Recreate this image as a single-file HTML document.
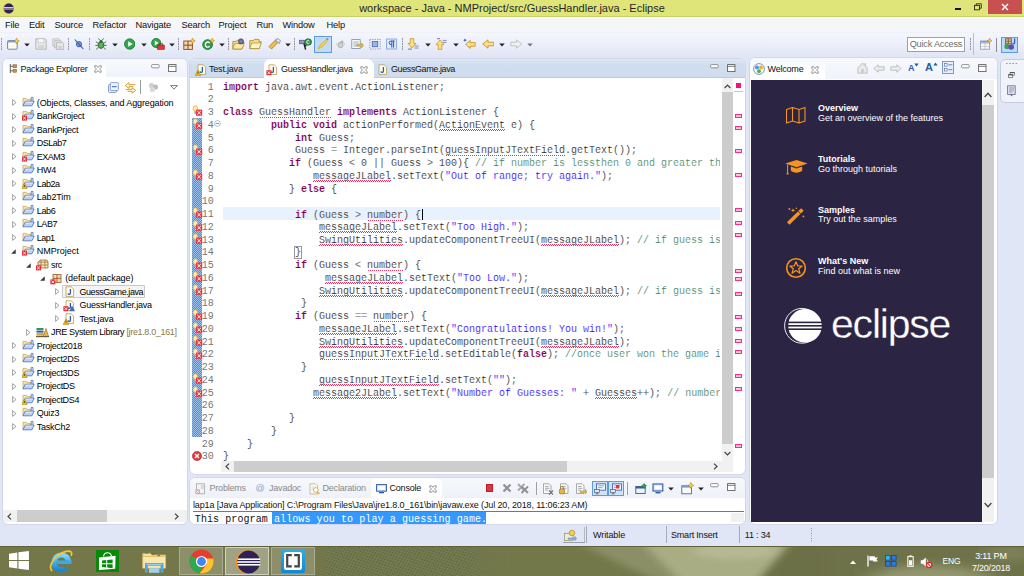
<!DOCTYPE html><html><head><meta charset="utf-8"><title>Eclipse</title><style>
*{box-sizing:border-box;margin:0;padding:0}
html,body{width:1024px;height:576px;overflow:hidden;background:#e1e6f6;font-family:"Liberation Sans",sans-serif;font-size:9px;color:#000}
.abs{position:absolute}
#title{position:absolute;left:0;top:0;width:1024px;height:16.6px;background:#e0e57a;border-bottom:1px solid #cbd066}
#title .t{position:absolute;left:0;width:1024px;top:2.1px;text-align:center;font-size:11px;line-height:13px;color:#262626;letter-spacing:0px}
#menubar{position:absolute;left:0;top:16.5px;width:1024px;height:15px;background:#f5f6f7}
#menubar span{position:absolute;top:3.2px;font-size:9.3px;line-height:11px;letter-spacing:-0.15px;color:#111}
#toolbar{position:absolute;left:0;top:31.5px;width:1024px;height:26.5px;background:linear-gradient(#ecedf2 0,#f4f6fd 1.2px,#eceffa 50%,#e3e7f6 85%,#e1e6f6)}
.panel{position:absolute;background:#fff;border-radius:5px;overflow:hidden;box-shadow:0 0 0 0.8px #cdd3e4}
.ui{font-size:9px;letter-spacing:-0.2px;white-space:nowrap;line-height:11px}
</style></head><body><div id="title"><div class="t">workspace - Java - NMProject/src/GuessHandler.java - Eclipse</div><svg class="abs" style="left:3px;top:3px" width="11" height="11" viewBox="0 0 11 11"><circle cx="5.5" cy="5.5" r="5.3" fill="#f7941e"/><circle cx="5.8" cy="5.5" r="4.9" fill="#2c2255"/><rect x="1" y="4.2" width="9.6" height="0.8" fill="#fff"/><rect x="1" y="5.6" width="9.6" height="0.8" fill="#fff"/></svg><div class="abs" style="left:955px;top:8px;width:6px;height:2px;background:#111"></div><svg class="abs" style="left:973.6px;top:3px" width="8" height="7.6" viewBox="0 0 9 8"><path d="M2.5 2.2V0.6H8.2V5.6H6.4" fill="none" stroke="#222" stroke-width="1"/><rect x="0.6" y="2.4" width="5.6" height="5" fill="none" stroke="#222" stroke-width="1"/></svg><div class="abs" style="left:988px;top:0;width:34px;height:13.5px;background:#c85050"></div><svg class="abs" style="left:1001px;top:3px" width="8" height="8" viewBox="0 0 8 8"><path d="M1 1L7 7M7 1L1 7" stroke="#fff" stroke-width="1.4"/></svg></div><div id="menubar"><span style="left:5px">File</span><span style="left:29px">Edit</span><span style="left:54.5px">Source</span><span style="left:92.5px">Refactor</span><span style="left:135.5px">Navigate</span><span style="left:181.5px">Search</span><span style="left:218.5px">Project</span><span style="left:256.5px">Run</span><span style="left:282.5px">Window</span><span style="left:326.5px">Help</span></div><div id="toolbar"></div><div class="abs" style="left:1.2px;top:37.5px;width:1px;height:13px;background-image:linear-gradient(#8f8f9a 50%,transparent 50%);background-size:1px 2.6px"></div><svg class="abs" style="left:7px;top:38px" width="12.5" height="12" viewBox="0 0 12.5 12"><rect x="0.6" y="2.6" width="9.6" height="8.6" rx="0.8" fill="#fdfbea" stroke="#5a78b8" stroke-width="0.9"/><rect x="0.6" y="2.6" width="9.6" height="1.8" fill="#7a9ad8"/><path d="M9.6 0.2L10.7 2.2L12.4 3L10.7 4L9.6 6L8.6 4L6.8 3L8.6 2.2Z" fill="#f6d04a" stroke="#a97a10" stroke-width="0.5"/></svg><svg class="abs" style="left:23.5px;top:42.5px" width="6" height="4" viewBox="0 0 6 4"><path d="M0.2 0.4H5.8L3 3.6Z" fill="#222"/></svg><svg class="abs" style="left:35px;top:38px" width="12" height="12" viewBox="0 0 12 12"><path d="M0.8 0.8H10L11.2 2V11.2H0.8Z" fill="#e9e9e9" stroke="#b0b0b0" stroke-width="0.9"/><rect x="3" y="0.8" width="6" height="4" fill="#f8f8f8" stroke="#b8b8b8" stroke-width="0.6"/><rect x="3" y="7" width="6" height="4.2" fill="#d5d5d5"/></svg><svg class="abs" style="left:52px;top:38px" width="12.5" height="12" viewBox="0 0 12.5 12"><path d="M0.8 0.8H7L8 1.8V8H0.8Z" fill="#ededed" stroke="#b8b8b8" stroke-width="0.8"/><path d="M2.6 2.6H8.8L9.8 3.6V9.8H2.6Z" fill="#e9e9e9" stroke="#b5b5b5" stroke-width="0.8"/><path d="M4.4 4.4H10.6L11.6 5.4V11.6H4.4Z" fill="#e6e6e6" stroke="#b0b0b0" stroke-width="0.8"/><rect x="6" y="8" width="4" height="3.4" fill="#d0d0d0"/></svg><div class="abs" style="left:68.2px;top:37.5px;width:1px;height:13px;background-image:linear-gradient(#8f8f9a 50%,transparent 50%);background-size:1px 2.6px"></div><svg class="abs" style="left:74px;top:38px" width="10" height="12" viewBox="0 0 10 12"><circle cx="5" cy="6.2" r="2.6" fill="#7aa0e0" stroke="#2f5aa8" stroke-width="0.9"/><path d="M0.8 1.5L9.2 10.8" stroke="#2f5aa8" stroke-width="1.1"/></svg><div class="abs" style="left:89.2px;top:37.5px;width:1px;height:13px;background-image:linear-gradient(#8f8f9a 50%,transparent 50%);background-size:1px 2.6px"></div><svg class="abs" style="left:94.5px;top:38px" width="12" height="12" viewBox="0 0 12 12"><ellipse cx="6" cy="7" rx="2.8" ry="3.4" fill="#5fae5a" stroke="#1f5a2a" stroke-width="0.8"/><circle cx="6" cy="3.2" r="1.5" fill="#2f6f3a"/><path d="M3.2 5.4L0.8 3.6M8.8 5.4L11.2 3.6M3 7.4H0.4M9 7.4H11.6M3.4 9.4L1.2 11.4M8.6 9.4L10.8 11.4M4.6 2L3.4 0.4M7.4 2L8.6 0.4" stroke="#1f5a2a" stroke-width="0.8"/></svg><svg class="abs" style="left:112px;top:42.5px" width="6" height="4" viewBox="0 0 6 4"><path d="M0.2 0.4H5.8L3 3.6Z" fill="#222"/></svg><svg class="abs" style="left:123.5px;top:38px" width="11.5" height="12" viewBox="0 0 11.5 12"><circle cx="5.7" cy="6" r="5.2" fill="#2fa84a" stroke="#1a7030" stroke-width="0.8"/><path d="M4.2 3.2L8.6 6L4.2 8.8Z" fill="#fff"/></svg><svg class="abs" style="left:140.5px;top:42.5px" width="6" height="4" viewBox="0 0 6 4"><path d="M0.2 0.4H5.8L3 3.6Z" fill="#222"/></svg><svg class="abs" style="left:151px;top:38px" width="14" height="12" viewBox="0 0 14 12"><circle cx="5.2" cy="5" r="4.6" fill="#2fa84a" stroke="#1a7030" stroke-width="0.8"/><path d="M3.8 2.6L7.6 5L3.8 7.4Z" fill="#fff"/><rect x="6.4" y="7" width="7" height="4.6" rx="0.6" fill="#e0353d" stroke="#8a1a20" stroke-width="0.6"/><path d="M8.2 7V5.8H11.6V7" fill="none" stroke="#8a1a20" stroke-width="0.8"/></svg><svg class="abs" style="left:169px;top:42.5px" width="6" height="4" viewBox="0 0 6 4"><path d="M0.2 0.4H5.8L3 3.6Z" fill="#222"/></svg><div class="abs" style="left:178px;top:37.5px;width:1px;height:13px;background-image:linear-gradient(#8f8f9a 50%,transparent 50%);background-size:1px 2.6px"></div><svg class="abs" style="left:183px;top:38px" width="12.5" height="12" viewBox="0 0 12.5 12"><rect x="0.8" y="3" width="8.6" height="8.4" fill="#f1d9b0" stroke="#8a4a20" stroke-width="0.9"/><path d="M5 3V11.4M0.8 7.2H9.4" stroke="#8a4a20" stroke-width="1"/><path d="M9.6 0.2L10.6 2L12.3 2.8L10.6 3.7L9.6 5.6L8.7 3.7L7 2.8L8.7 2Z" fill="#f6d04a" stroke="#a97a10" stroke-width="0.5"/></svg><svg class="abs" style="left:201.5px;top:38px" width="13" height="12" viewBox="0 0 13 12"><circle cx="5.6" cy="6.6" r="4.9" fill="#2f9a4a" stroke="#1a6a30" stroke-width="0.8"/><path d="M7.6 5A2.4 2.6 0 1 0 7.6 8.2" fill="none" stroke="#fff" stroke-width="1.3"/><path d="M10.2 0.2L11.1 1.9L12.7 2.6L11.1 3.4L10.2 5.2L9.4 3.4L7.8 2.6L9.4 1.9Z" fill="#f6d04a" stroke="#a97a10" stroke-width="0.5"/></svg><svg class="abs" style="left:218.5px;top:42.5px" width="6" height="4" viewBox="0 0 6 4"><path d="M0.2 0.4H5.8L3 3.6Z" fill="#222"/></svg><div class="abs" style="left:227.5px;top:37.5px;width:1px;height:13px;background-image:linear-gradient(#8f8f9a 50%,transparent 50%);background-size:1px 2.6px"></div><svg class="abs" style="left:231.5px;top:38px" width="13" height="12" viewBox="0 0 13 12"><path d="M0.8 3.4H4.2L5.2 2.2H9.4V4.4H12L10 11H0.8Z" fill="#f6dc8a" stroke="#a9862a" stroke-width="0.8"/><path d="M2.6 5.6H12.2L10 11H0.8Z" fill="#fbe9a8" stroke="#a9862a" stroke-width="0.7"/><circle cx="9" cy="3.4" r="2.6" fill="#7a6ab0" stroke="#3a2a70" stroke-width="0.6"/><circle cx="9" cy="3.4" r="1" fill="#4fb04a"/></svg><svg class="abs" style="left:249px;top:38px" width="13" height="12" viewBox="0 0 13 12"><path d="M0.8 2.6H4.4L5.4 1.4H10V3.6H12.2L10.2 10.6H0.8Z" fill="#f6dc8a" stroke="#a9862a" stroke-width="0.8"/><path d="M2.8 5H12.4L10.2 10.6H0.8Z" fill="#fdf3c8" stroke="#a9862a" stroke-width="0.7"/></svg><svg class="abs" style="left:268px;top:38px" width="13" height="12" viewBox="0 0 13 12"><path d="M1 9.5L7 3.5L9.5 6L3.5 12Z" fill="#f0c04a" stroke="#8a6a1a" stroke-width="0.7" transform="translate(0,-1)"/><path d="M7.4 1.8L11.2 5.6L12.4 2.8L10.2 0.6Z" fill="#e9e9f3" stroke="#6a6a8a" stroke-width="0.7"/></svg><svg class="abs" style="left:285px;top:42.5px" width="6" height="4" viewBox="0 0 6 4"><path d="M0.2 0.4H5.8L3 3.6Z" fill="#222"/></svg><div class="abs" style="left:294px;top:37.5px;width:1px;height:13px;background-image:linear-gradient(#8f8f9a 50%,transparent 50%);background-size:1px 2.6px"></div><svg class="abs" style="left:299px;top:38px" width="13" height="12" viewBox="0 0 13 12"><rect x="0.6" y="2.2" width="5" height="3.6" fill="#8a9ac0" stroke="#3a4a70" stroke-width="0.6"/><path d="M5 5.6L6.6 11.6" stroke="#222" stroke-width="1.5"/><path d="M5.4 5.4L8 8L5.6 9Z" fill="#222"/><circle cx="9.2" cy="4" r="3.3" fill="#2f9a4a" stroke="#1a5a2a" stroke-width="0.7"/><path d="M10.4 3A1.5 1.6 0 1 0 10.4 5" fill="none" stroke="#fff" stroke-width="0.9"/></svg><div class="abs" style="left:314px;top:36px;width:17.5px;height:16.5px;background:#c2dbf8;border:1px solid #5b9be0"></div><svg class="abs" style="left:317px;top:38px" width="12" height="12" viewBox="0 0 12 12"><path d="M1 11L3.4 6.6L10.4 0.8L11.4 1.8L5.4 8.8Z" fill="#f4d44a" stroke="#c9a020" stroke-width="0.6"/><path d="M0.6 11.4L2.6 8L4.4 9.8Z" fill="#e9c030"/><path d="M9.4 1.6L11 0.4" stroke="#8a8a9a" stroke-width="1.4"/></svg><svg class="abs" style="left:335.5px;top:38px" width="9" height="12" viewBox="0 0 9 12"><ellipse cx="4.5" cy="7" rx="2.6" ry="2.8" fill="#cfcfcf" stroke="#a0a0a0" stroke-width="0.7"/><circle cx="6" cy="4" r="1.6" fill="#b5b5b5"/><path d="M1 6H0M8 6H9" stroke="#a0a0a0" stroke-width="0.7"/></svg><svg class="abs" style="left:351px;top:38px" width="13" height="12" viewBox="0 0 13 12"><rect x="0.8" y="1.6" width="8.4" height="9" fill="#fbfbf3" stroke="#7a8ab0" stroke-width="0.8"/><path d="M2.4 4H7.6M2.4 6H7.6M2.4 8H6" stroke="#7a8ab0" stroke-width="0.7"/><path d="M6 6.6H10.6V5L12.6 7.4L10.6 9.8V8.2H6Z" fill="#f3c64a" stroke="#a97a10" stroke-width="0.5"/></svg><svg class="abs" style="left:368.5px;top:38px" width="12" height="12" viewBox="0 0 12 12"><rect x="0.8" y="1.4" width="10.4" height="9.6" fill="#eef3fb" stroke="#7a8ab0" stroke-width="0.8" stroke-dasharray="1.4 1"/><rect x="3.2" y="3.6" width="5.6" height="5.2" fill="#9ab4e8" stroke="#3a5aa0" stroke-width="0.7"/></svg><svg class="abs" style="left:386px;top:38px" width="11" height="12" viewBox="0 0 11 12"><rect x="0.6" y="1" width="9.8" height="10" fill="#dfe9fb" stroke="#7a9ad8" stroke-width="0.8"/><path d="M7.6 3V9.6M5.8 3V9.6M8.6 3H5A1.8 1.8 0 0 0 5 6.6H5.8" fill="none" stroke="#2f5aa8" stroke-width="1"/></svg><div class="abs" style="left:402px;top:37.5px;width:1px;height:13px;background-image:linear-gradient(#8f8f9a 50%,transparent 50%);background-size:1px 2.6px"></div><svg class="abs" style="left:406.5px;top:38px" width="12" height="12" viewBox="0 0 12 12"><path d="M3.2 0.6H6.8V5.4H9L5 10L1 5.4H3.2Z" fill="#fbdf86" stroke="#c58a1c" stroke-width="0.7"/><path d="M7.6 8H11.6M7.6 10H11.6" stroke="#6a7ab0" stroke-width="0.8"/><rect x="1" y="10.6" width="4" height="1" fill="#6a7ab0"/></svg><svg class="abs" style="left:424.5px;top:42.5px" width="6" height="4" viewBox="0 0 6 4"><path d="M0.2 0.4H5.8L3 3.6Z" fill="#222"/></svg><svg class="abs" style="left:434.5px;top:38px" width="12" height="12" viewBox="0 0 12 12"><path d="M3.2 11.4H6.8V6.6H9L5 2L1 6.6H3.2Z" fill="#fbdf86" stroke="#c58a1c" stroke-width="0.7"/><path d="M7.6 2.4H11.6M7.6 4.4H11.6" stroke="#6a7ab0" stroke-width="0.8"/><rect x="2" y="0.2" width="3" height="1" fill="#6a7ab0"/></svg><svg class="abs" style="left:452.5px;top:42.5px" width="6" height="4" viewBox="0 0 6 4"><path d="M0.2 0.4H5.8L3 3.6Z" fill="#222"/></svg><svg class="abs" style="left:463px;top:38px" width="13" height="12" viewBox="0 0 13 12"><path d="M12.2 4.6H7.2V2.4L2.6 6.4L7.2 10.4V8.2H12.2Z" fill="#fbdf86" stroke="#c58a1c" stroke-width="0.8"/><path d="M2 0.4L2.6 1.6L3.8 2.2L2.6 2.8L2 4L1.4 2.8L0.2 2.2L1.4 1.6Z" fill="#3a5aa0"/></svg><svg class="abs" style="left:481.5px;top:38px" width="12.5" height="12" viewBox="0 0 12.5 12"><path d="M11.8 4.2H6V1.8L0.8 6L6 10.2V7.8H11.8Z" fill="#fbdf86" stroke="#c58a1c" stroke-width="0.8"/></svg><svg class="abs" style="left:498.5px;top:42.5px" width="6" height="4" viewBox="0 0 6 4"><path d="M0.2 0.4H5.8L3 3.6Z" fill="#222"/></svg><svg class="abs" style="left:509.5px;top:38px" width="12.5" height="12" viewBox="0 0 12.5 12"><path d="M0.8 4.2H6.6V1.8L11.8 6L6.6 10.2V7.8H0.8Z" fill="#f1f1f1" stroke="#b8b8b8" stroke-width="0.8"/></svg><svg class="abs" style="left:526.5px;top:42.5px" width="6" height="4" viewBox="0 0 6 4"><path d="M0.2 0.4H5.8L3 3.6Z" fill="#777"/></svg><div class="abs" style="left:907px;top:36.5px;width:57.5px;height:15.5px;background:#fff;border:1px solid #9aa0ad"></div><div class="abs ui" style="left:909.7px;top:39px;color:#6e6e6e;font-size:9.2px;letter-spacing:-0.22px">Quick Access</div><div class="abs" style="left:969.5px;top:37.5px;width:1px;height:13px;background-image:linear-gradient(#8f8f9a 50%,transparent 50%);background-size:1px 2.6px"></div><div class="abs" style="left:972.5px;top:33px;width:1px;height:22px;background:#b8bfd0"></div><svg class="abs" style="left:980px;top:38px" width="12" height="12" viewBox="0 0 12 12"><rect x="0.6" y="3" width="8.8" height="8.2" fill="#fdfbea" stroke="#8a96b0" stroke-width="0.8"/><path d="M0.6 5.6H9.4M0.6 8.4H9.4M5 3V11.2" stroke="#a9b0c4" stroke-width="0.6"/><rect x="0.6" y="3" width="8.8" height="1.6" fill="#7a9ad8"/><path d="M9.6 0.2L10.5 1.9L12 2.6L10.5 3.4L9.6 5.2L8.8 3.4L7.2 2.6L8.8 1.9Z" fill="#f6d04a" stroke="#a97a10" stroke-width="0.5"/></svg><div class="abs" style="left:996px;top:38px;width:1px;height:14px;background:#8a8a8a"></div><div class="abs" style="left:1000.5px;top:37px;width:17.5px;height:16px;background:#bcd8fa;border:1px solid #5b9be0"></div><svg class="abs" style="left:1003.5px;top:38px" width="12" height="12" viewBox="0 0 12 12"><rect x="1.4" y="0.8" width="6" height="5" fill="#e3b88a" stroke="#7a4a20" stroke-width="0.7"/><path d="M4.4 0.8V5.8M1.4 3.3H7.4" stroke="#7a4a20" stroke-width="0.7"/><circle cx="3" cy="8.4" r="2.6" fill="#3f9f5a"/><circle cx="7.2" cy="9" r="2.8" fill="#6a4aa8"/><path d="M10.6 0.6V4.6C10.6 6 9 6.2 8.6 5.2" fill="none" stroke="#2f5aa8" stroke-width="1.2"/></svg><div class="panel" style="left:2.5px;top:58.5px;width:184.5px;height:465.1px;"><div class="abs" style="left:0;top:0;width:185px;height:18.6px;background:linear-gradient(#f7f9fd,#f0f3fa)"></div><div class="abs" style="left:0;top:0;width:103.5px;height:18.6px;background:linear-gradient(#f4f7fc,#fff 70%);border-radius:5px 8px 0 0"></div><svg class="abs" style="left:6.2px;top:5.4px" width="9" height="10" viewBox="0 0 9 11"><path d="M1 0V10M1 2.5H4M1 7.5H4" stroke="#555" stroke-width="1" fill="none"/><rect x="4" y="0.8" width="4" height="3.4" fill="#c98b4a" stroke="#8a5a2a" stroke-width="0.5"/><rect x="4" y="5.8" width="4" height="3.4" fill="#c98b4a" stroke="#8a5a2a" stroke-width="0.5"/></svg><div class="abs ui" style="left:18px;top:5.3px;letter-spacing:-0.25px;color:#111">Package Explorer</div><svg class="abs" style="left:91px;top:6.9px" width="8" height="8" viewBox="0 0 8 8"><path d="M0.8 0.8H2.6L4 2.4L5.4 0.8H7.2V2.2L5.6 4L7.2 5.8V7.2H5.4L4 5.6L2.6 7.2H0.8V5.8L2.4 4L0.8 2.2Z" fill="#fff" stroke="#666" stroke-width="0.7"/></svg><svg class="abs" style="left:148.2px;top:5.199999999999994px" width="9" height="5" viewBox="0 0 9 5"><rect x="0.6" y="0.6" width="7.6" height="3.2" rx="0.9" fill="#fff" stroke="#777" stroke-width="0.8"/></svg><svg class="abs" style="left:165.85px;top:5.6px" width="9" height="9" viewBox="0 0 9 9"><rect x="0.6" y="0.6" width="7.4" height="7" fill="#fff" stroke="#555" stroke-width="0.8"/><path d="M0.6 2.3H8" stroke="#555" stroke-width="0.8"/></svg><svg class="abs" style="left:105.2px;top:23.6px" width="11" height="11" viewBox="0 0 11 11"><rect x="0.5" y="2.5" width="8" height="8" rx="1" fill="#e8eefb" stroke="#6f8cc4" stroke-width="0.8"/><rect x="2.3" y="0.6" width="8" height="8" rx="1" fill="#eef3fd" stroke="#6f8cc4" stroke-width="0.8"/><rect x="4" y="4.2" width="4.6" height="1" fill="#3a5fa8"/></svg><svg class="abs" style="left:121px;top:22.6px" width="13" height="13" viewBox="0 0 13 13"><path d="M11.4 3.6H5V1.6L1.2 4.6L5 7.4V5.6H9.4" fill="#fdf3cf" stroke="#c9931a" stroke-width="0.8"/><path d="M1.6 8.4H8V6.6L11.8 9.4L8 12.2V10.4H3.6" fill="#fdf3cf" stroke="#c9931a" stroke-width="0.8"/></svg><div class="abs" style="left:137.5px;top:21.6px;width:1px;height:14px;background:#9a9a9a"></div><svg class="abs" style="left:145px;top:23.6px" width="11" height="11" viewBox="0 0 11 11"><circle cx="3.5" cy="3.5" r="2.6" fill="#cfcfcf"/><circle cx="7.5" cy="5" r="2.6" fill="#bdbdbd"/><circle cx="4.5" cy="7.5" r="2.6" fill="#d9d9d9"/></svg><svg class="abs" style="left:167px;top:26px" width="8" height="5" viewBox="0 0 8 5"><path d="M0.6 0.6H7.4L4 4.2Z" fill="#fff" stroke="#555" stroke-width="0.8"/></svg><svg class="abs" style="left:9.5px;top:40.89999999999999px" width="5" height="7" viewBox="0 0 5 7"><path d="M0.6 0.6L4 3.5L0.6 6.4Z" fill="#fff" stroke="#8a8a8a" stroke-width="0.8"/></svg><svg class="abs" style="left:19.0px;top:37.3px" width="13" height="12" viewBox="0 0 13 12"><path d="M1 9.6V2.4H4.4L5.4 3.4H8.6V5.4" fill="#f8e7ad" stroke="#c9a550" stroke-width="0.8"/><path d="M9.2 5V1.4H11V5.6" fill="#eef4fd" stroke="#4a70b8" stroke-width="0.8"/><path d="M0.9 9.8L3.2 5.2H12.2L9.9 9.8Z" fill="#bcd2f4" stroke="#4a70b8" stroke-width="0.8"/><path d="M3.6 6.1H10.8" stroke="#eaf1fc" stroke-width="0.8"/></svg><div class="abs ui" style="left:34.3px;top:38.099999999999994px;line-height:12px;letter-spacing:-0.129px">(Objects, Classes, and Aggregation</div><svg class="abs" style="left:9.5px;top:54.39999999999999px" width="5" height="7" viewBox="0 0 5 7"><path d="M0.6 0.6L4 3.5L0.6 6.4Z" fill="#fff" stroke="#8a8a8a" stroke-width="0.8"/></svg><svg class="abs" style="left:19.0px;top:50.8px" width="13" height="12" viewBox="0 0 13 12"><path d="M1 9.6V2.4H4.4L5.4 3.4H8.6V5.4" fill="#f8e7ad" stroke="#c9a550" stroke-width="0.8"/><path d="M9.2 5V1.4H11V5.6" fill="#eef4fd" stroke="#4a70b8" stroke-width="0.8"/><path d="M0.9 9.8L3.2 5.2H12.2L9.9 9.8Z" fill="#bcd2f4" stroke="#4a70b8" stroke-width="0.8"/><path d="M3.6 6.1H10.8" stroke="#eaf1fc" stroke-width="0.8"/><rect x="0" y="6.6" width="5" height="5" fill="#e0303a"/><path d="M1.2 7.8L3.8 10.4M3.8 7.8L1.2 10.4" stroke="#fff" stroke-width="0.9"/></svg><div class="abs ui" style="left:34.3px;top:51.599999999999994px;line-height:12px;letter-spacing:-0.176px">BankGroject</div><svg class="abs" style="left:9.5px;top:67.89999999999999px" width="5" height="7" viewBox="0 0 5 7"><path d="M0.6 0.6L4 3.5L0.6 6.4Z" fill="#fff" stroke="#8a8a8a" stroke-width="0.8"/></svg><svg class="abs" style="left:19.0px;top:64.3px" width="13" height="12" viewBox="0 0 13 12"><path d="M1 9.6V2.4H4.4L5.4 3.4H8.6V5.4" fill="#f8e7ad" stroke="#c9a550" stroke-width="0.8"/><path d="M9.2 5V1.4H11V5.6" fill="#eef4fd" stroke="#4a70b8" stroke-width="0.8"/><path d="M0.9 9.8L3.2 5.2H12.2L9.9 9.8Z" fill="#bcd2f4" stroke="#4a70b8" stroke-width="0.8"/><path d="M3.6 6.1H10.8" stroke="#eaf1fc" stroke-width="0.8"/></svg><div class="abs ui" style="left:34.3px;top:65.1px;line-height:12px;letter-spacing:-0.193px">BankPrject</div><svg class="abs" style="left:9.5px;top:81.39999999999999px" width="5" height="7" viewBox="0 0 5 7"><path d="M0.6 0.6L4 3.5L0.6 6.4Z" fill="#fff" stroke="#8a8a8a" stroke-width="0.8"/></svg><svg class="abs" style="left:19.0px;top:77.8px" width="13" height="12" viewBox="0 0 13 12"><path d="M1 9.6V2.4H4.4L5.4 3.4H8.6V5.4" fill="#f8e7ad" stroke="#c9a550" stroke-width="0.8"/><path d="M9.2 5V1.4H11V5.6" fill="#eef4fd" stroke="#4a70b8" stroke-width="0.8"/><path d="M0.9 9.8L3.2 5.2H12.2L9.9 9.8Z" fill="#bcd2f4" stroke="#4a70b8" stroke-width="0.8"/><path d="M3.6 6.1H10.8" stroke="#eaf1fc" stroke-width="0.8"/></svg><div class="abs ui" style="left:34.3px;top:78.6px;line-height:12px;letter-spacing:-0.522px">DSLab7</div><svg class="abs" style="left:9.5px;top:94.89999999999999px" width="5" height="7" viewBox="0 0 5 7"><path d="M0.6 0.6L4 3.5L0.6 6.4Z" fill="#fff" stroke="#8a8a8a" stroke-width="0.8"/></svg><svg class="abs" style="left:19.0px;top:91.3px" width="13" height="12" viewBox="0 0 13 12"><path d="M1 9.6V2.4H4.4L5.4 3.4H8.6V5.4" fill="#f8e7ad" stroke="#c9a550" stroke-width="0.8"/><path d="M9.2 5V1.4H11V5.6" fill="#eef4fd" stroke="#4a70b8" stroke-width="0.8"/><path d="M0.9 9.8L3.2 5.2H12.2L9.9 9.8Z" fill="#bcd2f4" stroke="#4a70b8" stroke-width="0.8"/><path d="M3.6 6.1H10.8" stroke="#eaf1fc" stroke-width="0.8"/><rect x="0" y="6.6" width="5" height="5" fill="#e0303a"/><path d="M1.2 7.8L3.8 10.4M3.8 7.8L1.2 10.4" stroke="#fff" stroke-width="0.9"/></svg><div class="abs ui" style="left:34.3px;top:92.1px;line-height:12px;letter-spacing:-0.483px">EXAM3</div><svg class="abs" style="left:9.5px;top:108.39999999999999px" width="5" height="7" viewBox="0 0 5 7"><path d="M0.6 0.6L4 3.5L0.6 6.4Z" fill="#fff" stroke="#8a8a8a" stroke-width="0.8"/></svg><svg class="abs" style="left:19.0px;top:104.8px" width="13" height="12" viewBox="0 0 13 12"><path d="M1 9.6V2.4H4.4L5.4 3.4H8.6V5.4" fill="#f8e7ad" stroke="#c9a550" stroke-width="0.8"/><path d="M9.2 5V1.4H11V5.6" fill="#eef4fd" stroke="#4a70b8" stroke-width="0.8"/><path d="M0.9 9.8L3.2 5.2H12.2L9.9 9.8Z" fill="#bcd2f4" stroke="#4a70b8" stroke-width="0.8"/><path d="M3.6 6.1H10.8" stroke="#eaf1fc" stroke-width="0.8"/></svg><div class="abs ui" style="left:34.3px;top:105.6px;line-height:12px;letter-spacing:-0.333px">HW4</div><svg class="abs" style="left:9.5px;top:121.89999999999999px" width="5" height="7" viewBox="0 0 5 7"><path d="M0.6 0.6L4 3.5L0.6 6.4Z" fill="#fff" stroke="#8a8a8a" stroke-width="0.8"/></svg><svg class="abs" style="left:19.0px;top:118.3px" width="13" height="12" viewBox="0 0 13 12"><path d="M1 9.6V2.4H4.4L5.4 3.4H8.6V5.4" fill="#f8e7ad" stroke="#c9a550" stroke-width="0.8"/><path d="M9.2 5V1.4H11V5.6" fill="#eef4fd" stroke="#4a70b8" stroke-width="0.8"/><path d="M0.9 9.8L3.2 5.2H12.2L9.9 9.8Z" fill="#bcd2f4" stroke="#4a70b8" stroke-width="0.8"/><path d="M3.6 6.1H10.8" stroke="#eaf1fc" stroke-width="0.8"/><path d="M2.5 6.2L5.2 11.4H-0.2Z" fill="#f5c21b" stroke="#a97a00" stroke-width="0.6"/><rect x="2.2" y="8" width="0.7" height="1.8" fill="#222"/></svg><div class="abs ui" style="left:34.3px;top:119.1px;line-height:12px;letter-spacing:-0.426px">Lab2a</div><svg class="abs" style="left:9.5px;top:135.4px" width="5" height="7" viewBox="0 0 5 7"><path d="M0.6 0.6L4 3.5L0.6 6.4Z" fill="#fff" stroke="#8a8a8a" stroke-width="0.8"/></svg><svg class="abs" style="left:19.0px;top:131.79999999999998px" width="13" height="12" viewBox="0 0 13 12"><path d="M1 9.6V2.4H4.4L5.4 3.4H8.6V5.4" fill="#f8e7ad" stroke="#c9a550" stroke-width="0.8"/><path d="M9.2 5V1.4H11V5.6" fill="#eef4fd" stroke="#4a70b8" stroke-width="0.8"/><path d="M0.9 9.8L3.2 5.2H12.2L9.9 9.8Z" fill="#bcd2f4" stroke="#4a70b8" stroke-width="0.8"/><path d="M3.6 6.1H10.8" stroke="#eaf1fc" stroke-width="0.8"/></svg><div class="abs ui" style="left:34.3px;top:132.6px;line-height:12px;letter-spacing:-0.127px">Lab2Tim</div><svg class="abs" style="left:9.5px;top:148.9px" width="5" height="7" viewBox="0 0 5 7"><path d="M0.6 0.6L4 3.5L0.6 6.4Z" fill="#fff" stroke="#8a8a8a" stroke-width="0.8"/></svg><svg class="abs" style="left:19.0px;top:145.29999999999998px" width="13" height="12" viewBox="0 0 13 12"><path d="M1 9.6V2.4H4.4L5.4 3.4H8.6V5.4" fill="#f8e7ad" stroke="#c9a550" stroke-width="0.8"/><path d="M9.2 5V1.4H11V5.6" fill="#eef4fd" stroke="#4a70b8" stroke-width="0.8"/><path d="M0.9 9.8L3.2 5.2H12.2L9.9 9.8Z" fill="#bcd2f4" stroke="#4a70b8" stroke-width="0.8"/><path d="M3.6 6.1H10.8" stroke="#eaf1fc" stroke-width="0.8"/></svg><div class="abs ui" style="left:34.3px;top:146.1px;line-height:12px;letter-spacing:-0.383px">Lab6</div><svg class="abs" style="left:9.5px;top:162.4px" width="5" height="7" viewBox="0 0 5 7"><path d="M0.6 0.6L4 3.5L0.6 6.4Z" fill="#fff" stroke="#8a8a8a" stroke-width="0.8"/></svg><svg class="abs" style="left:19.0px;top:158.79999999999998px" width="13" height="12" viewBox="0 0 13 12"><path d="M1 9.6V2.4H4.4L5.4 3.4H8.6V5.4" fill="#f8e7ad" stroke="#c9a550" stroke-width="0.8"/><path d="M9.2 5V1.4H11V5.6" fill="#eef4fd" stroke="#4a70b8" stroke-width="0.8"/><path d="M0.9 9.8L3.2 5.2H12.2L9.9 9.8Z" fill="#bcd2f4" stroke="#4a70b8" stroke-width="0.8"/><path d="M3.6 6.1H10.8" stroke="#eaf1fc" stroke-width="0.8"/></svg><div class="abs ui" style="left:34.3px;top:159.6px;line-height:12px;letter-spacing:-0.433px">LAB7</div><svg class="abs" style="left:9.5px;top:175.9px" width="5" height="7" viewBox="0 0 5 7"><path d="M0.6 0.6L4 3.5L0.6 6.4Z" fill="#fff" stroke="#8a8a8a" stroke-width="0.8"/></svg><svg class="abs" style="left:19.0px;top:172.29999999999998px" width="13" height="12" viewBox="0 0 13 12"><path d="M1 9.6V2.4H4.4L5.4 3.4H8.6V5.4" fill="#f8e7ad" stroke="#c9a550" stroke-width="0.8"/><path d="M9.2 5V1.4H11V5.6" fill="#eef4fd" stroke="#4a70b8" stroke-width="0.8"/><path d="M0.9 9.8L3.2 5.2H12.2L9.9 9.8Z" fill="#bcd2f4" stroke="#4a70b8" stroke-width="0.8"/><path d="M3.6 6.1H10.8" stroke="#eaf1fc" stroke-width="0.8"/></svg><div class="abs ui" style="left:34.3px;top:173.1px;line-height:12px;letter-spacing:-0.583px">Lap1</div><svg class="abs" style="left:8.9px;top:190.79999999999998px" width="5.2" height="5.2" viewBox="0 0 6 6"><path d="M5.2 0.8V5.2H0.8Z" fill="#3a3a3a" stroke="#222" stroke-width="0.5"/></svg><svg class="abs" style="left:19.0px;top:185.79999999999998px" width="13" height="12" viewBox="0 0 13 12"><path d="M1 9.6V2.4H4.4L5.4 3.4H8.6V5.4" fill="#f8e7ad" stroke="#c9a550" stroke-width="0.8"/><path d="M9.2 5V1.4H11V5.6" fill="#eef4fd" stroke="#4a70b8" stroke-width="0.8"/><path d="M0.9 9.8L3.2 5.2H12.2L9.9 9.8Z" fill="#bcd2f4" stroke="#4a70b8" stroke-width="0.8"/><path d="M3.6 6.1H10.8" stroke="#eaf1fc" stroke-width="0.8"/><rect x="0" y="6.6" width="5" height="5" fill="#e0303a"/><path d="M1.2 7.8L3.8 10.4M3.8 7.8L1.2 10.4" stroke="#fff" stroke-width="0.9"/></svg><div class="abs ui" style="left:34.3px;top:186.6px;line-height:12px;letter-spacing:-0.013px">NMProject</div><svg class="abs" style="left:23.099999999999998px;top:204.3px" width="5.2" height="5.2" viewBox="0 0 6 6"><path d="M5.2 0.8V5.2H0.8Z" fill="#3a3a3a" stroke="#222" stroke-width="0.5"/></svg><svg class="abs" style="left:33.2px;top:199.60000000000002px" width="13" height="13" viewBox="0 0 13 13"><path d="M2 4.2L4 2H11L12 4.2V10H2Z" fill="#f6e6c0" stroke="#9a6a30" stroke-width="0.8"/><path d="M2 4.2H12M5 2V10M9 2V10M2 7H12" stroke="#9a6a30" stroke-width="0.7" fill="none"/><rect x="0" y="7.4" width="5" height="5" fill="#e0303a"/><path d="M1.2 8.6L3.8 11.2M3.8 8.6L1.2 11.2" stroke="#fff" stroke-width="0.9"/></svg><div class="abs ui" style="left:48.5px;top:200.10000000000002px;line-height:12px;letter-spacing:-0.333px">src</div><svg class="abs" style="left:37.3px;top:217.8px" width="5.2" height="5.2" viewBox="0 0 6 6"><path d="M5.2 0.8V5.2H0.8Z" fill="#3a3a3a" stroke="#222" stroke-width="0.5"/></svg><svg class="abs" style="left:47.4px;top:213.10000000000002px" width="13" height="13" viewBox="0 0 13 13"><rect x="3" y="2.4" width="8" height="8" fill="#f1d9b0" stroke="#9a5a2a" stroke-width="0.8"/><path d="M7 2.4V10.4M3 6.4H11" stroke="#9a5a2a" stroke-width="0.9"/><rect x="0.4" y="7.4" width="5" height="5" fill="#e0303a"/><path d="M1.6 8.6L4.2 11.2M4.2 8.6L1.6 11.2" stroke="#fff" stroke-width="0.9"/></svg><div class="abs ui" style="left:62.69999999999999px;top:213.60000000000002px;line-height:12px;letter-spacing:-0.079px">(default package)</div><div class="abs" style="left:59.39999999999999px;top:226.90000000000003px;width:83.5px;height:12.2px;border:1px solid #c9c9c9;background:#f4f4f4;border-radius:1px"></div><svg class="abs" style="left:52.099999999999994px;top:229.90000000000003px" width="5" height="7" viewBox="0 0 5 7"><path d="M0.6 0.6L4 3.5L0.6 6.4Z" fill="#fff" stroke="#8a8a8a" stroke-width="0.8"/></svg><svg class="abs" style="left:60.599999999999994px;top:226.50000000000003px" width="13" height="13" viewBox="0 0 13 13"><path d="M3 1.8H8.2L10.6 4.2V11.4H3Z" fill="#fffdf0" stroke="#b99a4a" stroke-width="0.8"/><path d="M7.4 4V8.2C7.4 9.6 5.4 9.8 4.8 8.5" fill="none" stroke="#2f5aa8" stroke-width="1.3"/></svg><div class="abs ui" style="left:76.89999999999999px;top:227.10000000000002px;line-height:12px;letter-spacing:-0.409px">GuessGame.java</div><svg class="abs" style="left:52.099999999999994px;top:243.40000000000003px" width="5" height="7" viewBox="0 0 5 7"><path d="M0.6 0.6L4 3.5L0.6 6.4Z" fill="#fff" stroke="#8a8a8a" stroke-width="0.8"/></svg><svg class="abs" style="left:60.599999999999994px;top:240.00000000000003px" width="13" height="13" viewBox="0 0 13 13"><path d="M3 1.8H8.2L10.6 4.2V11.4H3Z" fill="#fffdf0" stroke="#b99a4a" stroke-width="0.8"/><path d="M7.4 4V8.2C7.4 9.6 5.4 9.8 4.8 8.5" fill="none" stroke="#2f5aa8" stroke-width="1.3"/><path d="M9 6.4L12 12.2H6.4Z" fill="#3b6cc0"/><rect x="0.4" y="7.2" width="5" height="5" fill="#e0303a"/><path d="M1.6 8.4L4.2 11M4.2 8.4L1.6 11" stroke="#fff" stroke-width="0.9"/></svg><div class="abs ui" style="left:76.89999999999999px;top:240.60000000000002px;line-height:12px;letter-spacing:-0.215px">GuessHandler.java</div><svg class="abs" style="left:52.099999999999994px;top:256.90000000000003px" width="5" height="7" viewBox="0 0 5 7"><path d="M0.6 0.6L4 3.5L0.6 6.4Z" fill="#fff" stroke="#8a8a8a" stroke-width="0.8"/></svg><svg class="abs" style="left:60.599999999999994px;top:253.50000000000003px" width="13" height="13" viewBox="0 0 13 13"><path d="M3 1.8H8.2L10.6 4.2V11.4H3Z" fill="#fffdf0" stroke="#b99a4a" stroke-width="0.8"/><path d="M7.4 4V8.2C7.4 9.6 5.4 9.8 4.8 8.5" fill="none" stroke="#2f5aa8" stroke-width="1.3"/><path d="M3 7L5.8 12.4H0.2Z" fill="#f5c21b" stroke="#a97a00" stroke-width="0.6"/><rect x="2.65" y="8.8" width="0.7" height="2" fill="#222"/></svg><div class="abs ui" style="left:76.89999999999999px;top:254.10000000000002px;line-height:12px;letter-spacing:-0.159px">Test.java</div><svg class="abs" style="left:23.7px;top:270.40000000000003px" width="5" height="7" viewBox="0 0 5 7"><path d="M0.6 0.6L4 3.5L0.6 6.4Z" fill="#fff" stroke="#8a8a8a" stroke-width="0.8"/></svg><svg class="abs" style="left:33.2px;top:267.6px" width="13" height="12" viewBox="0 0 13 12"><rect x="0.5" y="2" width="7" height="2" fill="#3f8f5a"/><rect x="0.5" y="4.6" width="7" height="2" fill="#2f5aa8"/><rect x="0.5" y="7.2" width="7" height="2.4" fill="#c9a03a"/><path d="M7 10.5L10 2.5L12.6 10.5Z" fill="#e2b64a" stroke="#8a6a1a" stroke-width="0.6"/><rect x="0" y="10" width="13" height="1.2" fill="#6a5a3a"/></svg><div class="abs ui" style="left:48.5px;top:267.6px;line-height:12px;letter-spacing:-0.347px">JRE System Library <span style="color:#8a7a4a">[jre1.8.0_161]</span></div><svg class="abs" style="left:9.5px;top:283.90000000000003px" width="5" height="7" viewBox="0 0 5 7"><path d="M0.6 0.6L4 3.5L0.6 6.4Z" fill="#fff" stroke="#8a8a8a" stroke-width="0.8"/></svg><svg class="abs" style="left:19.0px;top:280.3px" width="13" height="12" viewBox="0 0 13 12"><path d="M1 9.6V2.4H4.4L5.4 3.4H8.6V5.4" fill="#f8e7ad" stroke="#c9a550" stroke-width="0.8"/><path d="M9.2 5V1.4H11V5.6" fill="#eef4fd" stroke="#4a70b8" stroke-width="0.8"/><path d="M0.9 9.8L3.2 5.2H12.2L9.9 9.8Z" fill="#bcd2f4" stroke="#4a70b8" stroke-width="0.8"/><path d="M3.6 6.1H10.8" stroke="#eaf1fc" stroke-width="0.8"/></svg><div class="abs ui" style="left:34.3px;top:281.1px;line-height:12px;letter-spacing:-0.25px">Project2018</div><svg class="abs" style="left:9.5px;top:297.40000000000003px" width="5" height="7" viewBox="0 0 5 7"><path d="M0.6 0.6L4 3.5L0.6 6.4Z" fill="#fff" stroke="#8a8a8a" stroke-width="0.8"/></svg><svg class="abs" style="left:19.0px;top:293.8px" width="13" height="12" viewBox="0 0 13 12"><path d="M1 9.6V2.4H4.4L5.4 3.4H8.6V5.4" fill="#f8e7ad" stroke="#c9a550" stroke-width="0.8"/><path d="M9.2 5V1.4H11V5.6" fill="#eef4fd" stroke="#4a70b8" stroke-width="0.8"/><path d="M0.9 9.8L3.2 5.2H12.2L9.9 9.8Z" fill="#bcd2f4" stroke="#4a70b8" stroke-width="0.8"/><path d="M3.6 6.1H10.8" stroke="#eaf1fc" stroke-width="0.8"/></svg><div class="abs ui" style="left:34.3px;top:294.6px;line-height:12px;letter-spacing:-0.313px">Project2DS</div><svg class="abs" style="left:9.5px;top:310.90000000000003px" width="5" height="7" viewBox="0 0 5 7"><path d="M0.6 0.6L4 3.5L0.6 6.4Z" fill="#fff" stroke="#8a8a8a" stroke-width="0.8"/></svg><svg class="abs" style="left:19.0px;top:307.3px" width="13" height="12" viewBox="0 0 13 12"><path d="M1 9.6V2.4H4.4L5.4 3.4H8.6V5.4" fill="#f8e7ad" stroke="#c9a550" stroke-width="0.8"/><path d="M9.2 5V1.4H11V5.6" fill="#eef4fd" stroke="#4a70b8" stroke-width="0.8"/><path d="M0.9 9.8L3.2 5.2H12.2L9.9 9.8Z" fill="#bcd2f4" stroke="#4a70b8" stroke-width="0.8"/><path d="M3.6 6.1H10.8" stroke="#eaf1fc" stroke-width="0.8"/><path d="M2.5 6.2L5.2 11.4H-0.2Z" fill="#f5c21b" stroke="#a97a00" stroke-width="0.6"/><rect x="2.2" y="8" width="0.7" height="1.8" fill="#222"/></svg><div class="abs ui" style="left:34.3px;top:308.1px;line-height:12px;letter-spacing:-0.313px">Project3DS</div><svg class="abs" style="left:9.5px;top:324.40000000000003px" width="5" height="7" viewBox="0 0 5 7"><path d="M0.6 0.6L4 3.5L0.6 6.4Z" fill="#fff" stroke="#8a8a8a" stroke-width="0.8"/></svg><svg class="abs" style="left:19.0px;top:320.8px" width="13" height="12" viewBox="0 0 13 12"><path d="M1 9.6V2.4H4.4L5.4 3.4H8.6V5.4" fill="#f8e7ad" stroke="#c9a550" stroke-width="0.8"/><path d="M9.2 5V1.4H11V5.6" fill="#eef4fd" stroke="#4a70b8" stroke-width="0.8"/><path d="M0.9 9.8L3.2 5.2H12.2L9.9 9.8Z" fill="#bcd2f4" stroke="#4a70b8" stroke-width="0.8"/><path d="M3.6 6.1H10.8" stroke="#eaf1fc" stroke-width="0.8"/></svg><div class="abs ui" style="left:34.3px;top:321.6px;line-height:12px;letter-spacing:-0.28px">ProjectDS</div><svg class="abs" style="left:9.5px;top:337.90000000000003px" width="5" height="7" viewBox="0 0 5 7"><path d="M0.6 0.6L4 3.5L0.6 6.4Z" fill="#fff" stroke="#8a8a8a" stroke-width="0.8"/></svg><svg class="abs" style="left:19.0px;top:334.3px" width="13" height="12" viewBox="0 0 13 12"><path d="M1 9.6V2.4H4.4L5.4 3.4H8.6V5.4" fill="#f8e7ad" stroke="#c9a550" stroke-width="0.8"/><path d="M9.2 5V1.4H11V5.6" fill="#eef4fd" stroke="#4a70b8" stroke-width="0.8"/><path d="M0.9 9.8L3.2 5.2H12.2L9.9 9.8Z" fill="#bcd2f4" stroke="#4a70b8" stroke-width="0.8"/><path d="M3.6 6.1H10.8" stroke="#eaf1fc" stroke-width="0.8"/><path d="M2.5 6.2L5.2 11.4H-0.2Z" fill="#f5c21b" stroke="#a97a00" stroke-width="0.6"/><rect x="2.2" y="8" width="0.7" height="1.8" fill="#222"/></svg><div class="abs ui" style="left:34.3px;top:335.1px;line-height:12px;letter-spacing:-0.313px">ProjectDS4</div><svg class="abs" style="left:9.5px;top:351.40000000000003px" width="5" height="7" viewBox="0 0 5 7"><path d="M0.6 0.6L4 3.5L0.6 6.4Z" fill="#fff" stroke="#8a8a8a" stroke-width="0.8"/></svg><svg class="abs" style="left:19.0px;top:347.8px" width="13" height="12" viewBox="0 0 13 12"><path d="M1 9.6V2.4H4.4L5.4 3.4H8.6V5.4" fill="#f8e7ad" stroke="#c9a550" stroke-width="0.8"/><path d="M9.2 5V1.4H11V5.6" fill="#eef4fd" stroke="#4a70b8" stroke-width="0.8"/><path d="M0.9 9.8L3.2 5.2H12.2L9.9 9.8Z" fill="#bcd2f4" stroke="#4a70b8" stroke-width="0.8"/><path d="M3.6 6.1H10.8" stroke="#eaf1fc" stroke-width="0.8"/></svg><div class="abs ui" style="left:34.3px;top:348.6px;line-height:12px;letter-spacing:-0.223px">Quiz3</div><svg class="abs" style="left:9.5px;top:364.90000000000003px" width="5" height="7" viewBox="0 0 5 7"><path d="M0.6 0.6L4 3.5L0.6 6.4Z" fill="#fff" stroke="#8a8a8a" stroke-width="0.8"/></svg><svg class="abs" style="left:19.0px;top:361.3px" width="13" height="12" viewBox="0 0 13 12"><path d="M1 9.6V2.4H4.4L5.4 3.4H8.6V5.4" fill="#f8e7ad" stroke="#c9a550" stroke-width="0.8"/><path d="M9.2 5V1.4H11V5.6" fill="#eef4fd" stroke="#4a70b8" stroke-width="0.8"/><path d="M0.9 9.8L3.2 5.2H12.2L9.9 9.8Z" fill="#bcd2f4" stroke="#4a70b8" stroke-width="0.8"/><path d="M3.6 6.1H10.8" stroke="#eaf1fc" stroke-width="0.8"/></svg><div class="abs ui" style="left:34.3px;top:362.1px;line-height:12px;letter-spacing:-0.245px">TaskCh2</div><div class="abs" style="left:0;top:451.6px;width:185px;height:12px;background:#f1f1f1"></div><div class="abs" style="left:14.5px;top:451.6px;width:90px;height:12px;background:#cdcdcd"></div><svg class="abs" style="left:4.5px;top:454.3px" width="5" height="7" viewBox="0 0 5 7"><path d="M4 0.6L1 3.5L4 6.4" fill="none" stroke="#444" stroke-width="1.2"/></svg><svg class="abs" style="left:171.5px;top:454.3px" width="5" height="7" viewBox="0 0 5 7"><path d="M1 0.6L4 3.5L1 6.4" fill="none" stroke="#444" stroke-width="1.2"/></svg></div><div class="panel" style="left:190px;top:58.7px;width:555px;height:415px;"><div class="abs" style="left:0;top:0;width:556px;height:19px;background:linear-gradient(#dde8f5,#d0deef 30%,#cfdcee);border-bottom:0.7px solid #bccbe0"></div><div class="abs" style="left:73.5px;top:0;width:110px;height:19.5px;background:#fff;border-radius:6px 7px 0 0"></div><svg class="abs" style="left:4.5px;top:4px" width="13" height="13" viewBox="0 0 13 13"><path d="M3 1.8H8.2L10.6 4.2V11.4H3Z" fill="#fffdf0" stroke="#b99a4a" stroke-width="0.8"/><path d="M7.4 4V8.2C7.4 9.6 5.4 9.8 4.8 8.5" fill="none" stroke="#2f5aa8" stroke-width="1.3"/><path d="M3 7L5.8 12.4H0.2Z" fill="#f5c21b" stroke="#a97a00" stroke-width="0.6"/><rect x="2.65" y="8.8" width="0.7" height="2" fill="#222"/></svg><div class="abs ui" style="left:19px;top:5.7px;color:#111">Test.java</div><svg class="abs" style="left:76px;top:4px" width="13" height="13" viewBox="0 0 13 13"><path d="M3 1.8H8.2L10.6 4.2V11.4H3Z" fill="#fffdf0" stroke="#b99a4a" stroke-width="0.8"/><path d="M7.4 4V8.2C7.4 9.6 5.4 9.8 4.8 8.5" fill="none" stroke="#2f5aa8" stroke-width="1.3"/><rect x="0.4" y="7.2" width="5" height="5" fill="#e0303a"/><path d="M1.6 8.4L4.2 11M4.2 8.4L1.6 11" stroke="#fff" stroke-width="0.9"/></svg><div class="abs ui" style="left:91px;top:5.7px;color:#111;letter-spacing:-0.25px">GuessHandler.java</div><svg class="abs" style="left:170px;top:7px" width="8" height="8" viewBox="0 0 8 8"><path d="M0.8 0.8H2.6L4 2.4L5.4 0.8H7.2V2.2L5.6 4L7.2 5.8V7.2H5.4L4 5.6L2.6 7.2H0.8V5.8L2.4 4L0.8 2.2Z" fill="#fff" stroke="#666" stroke-width="0.7"/></svg><svg class="abs" style="left:186px;top:4px" width="13" height="13" viewBox="0 0 13 13"><path d="M3 1.8H8.2L10.6 4.2V11.4H3Z" fill="#fffdf0" stroke="#b99a4a" stroke-width="0.8"/><path d="M7.4 4V8.2C7.4 9.6 5.4 9.8 4.8 8.5" fill="none" stroke="#2f5aa8" stroke-width="1.3"/></svg><div class="abs ui" style="left:201px;top:5.7px;color:#111;letter-spacing:-0.4px">GuessGame.java</div><svg class="abs" style="left:519.7px;top:5.0px" width="9" height="5" viewBox="0 0 9 5"><rect x="0.6" y="0.6" width="7.6" height="3.2" rx="0.9" fill="#fff" stroke="#777" stroke-width="0.8"/></svg><svg class="abs" style="left:536.6px;top:5.0px" width="9" height="9" viewBox="0 0 9 9"><rect x="0.6" y="0.6" width="7.4" height="7" fill="#fff" stroke="#555" stroke-width="0.8"/><path d="M0.6 2.3H8" stroke="#555" stroke-width="0.8"/></svg><div class="abs" style="left:2px;top:59.25px;width:9.5px;height:318.75px;background-color:#9cc0ec;background-image:linear-gradient(45deg,#4d8fdc 25%,transparent 25%,transparent 75%,#4d8fdc 75%),linear-gradient(45deg,#4d8fdc 25%,transparent 25%,transparent 75%,#4d8fdc 75%);background-size:2px 2px;background-position:0 0,1px 1px"></div><div class="abs" style="left:33px;top:148.7px;width:496.5px;height:12.75px;background:#e8f2fe"></div><div class="abs" style="left:0;top:23.0px;width:23.7px;text-align:right;font-family:'Liberation Mono',monospace;font-size:10px;line-height:12.75px;color:#787878;white-space:pre">1
2
3
4
5
6
7
8
9
10
11
12
13
14
15
16
17
18
19
20
21
22
23
24
25
26
27
28
29
30</div><svg class="abs" style="left:1.8px;top:46.6px" width="11" height="12" viewBox="0 0 11 12"><ellipse cx="3.4" cy="3.6" rx="2.3" ry="2.9" fill="#fdeaa6" stroke="#d9ae3c" stroke-width="0.7"/><rect x="2.2" y="6.3" width="2.4" height="2.6" fill="#a9a9b0"/><rect x="4" y="4.6" width="6.2" height="6.2" fill="#e23b43"/><path d="M5.4 6L8.8 9.4M8.8 6L5.4 9.4" stroke="#fff" stroke-width="1"/></svg><svg class="abs" style="left:1.8px;top:59.35px" width="11" height="12" viewBox="0 0 11 12"><ellipse cx="3.4" cy="3.6" rx="2.3" ry="2.9" fill="#fdeaa6" stroke="#d9ae3c" stroke-width="0.7"/><rect x="2.2" y="6.3" width="2.4" height="2.6" fill="#a9a9b0"/><rect x="4" y="4.6" width="6.2" height="6.2" fill="#e23b43"/><path d="M5.4 6L8.8 9.4M8.8 6L5.4 9.4" stroke="#fff" stroke-width="1"/></svg><svg class="abs" style="left:1.8px;top:84.85px" width="11" height="12" viewBox="0 0 11 12"><ellipse cx="3.4" cy="3.6" rx="2.3" ry="2.9" fill="#fdeaa6" stroke="#d9ae3c" stroke-width="0.7"/><rect x="2.2" y="6.3" width="2.4" height="2.6" fill="#a9a9b0"/><rect x="4" y="4.6" width="6.2" height="6.2" fill="#e23b43"/><path d="M5.4 6L8.8 9.4M8.8 6L5.4 9.4" stroke="#fff" stroke-width="1"/></svg><svg class="abs" style="left:1.8px;top:110.35px" width="11" height="12" viewBox="0 0 11 12"><ellipse cx="3.4" cy="3.6" rx="2.3" ry="2.9" fill="#fdeaa6" stroke="#d9ae3c" stroke-width="0.7"/><rect x="2.2" y="6.3" width="2.4" height="2.6" fill="#a9a9b0"/><rect x="4" y="4.6" width="6.2" height="6.2" fill="#e23b43"/><path d="M5.4 6L8.8 9.4M8.8 6L5.4 9.4" stroke="#fff" stroke-width="1"/></svg><svg class="abs" style="left:1.8px;top:148.6px" width="11" height="12" viewBox="0 0 11 12"><ellipse cx="3.4" cy="3.6" rx="2.3" ry="2.9" fill="#fdeaa6" stroke="#d9ae3c" stroke-width="0.7"/><rect x="2.2" y="6.3" width="2.4" height="2.6" fill="#a9a9b0"/><rect x="4" y="4.6" width="6.2" height="6.2" fill="#e23b43"/><path d="M5.4 6L8.8 9.4M8.8 6L5.4 9.4" stroke="#fff" stroke-width="1"/></svg><svg class="abs" style="left:1.8px;top:161.35px" width="11" height="12" viewBox="0 0 11 12"><ellipse cx="3.4" cy="3.6" rx="2.3" ry="2.9" fill="#fdeaa6" stroke="#d9ae3c" stroke-width="0.7"/><rect x="2.2" y="6.3" width="2.4" height="2.6" fill="#a9a9b0"/><rect x="4" y="4.6" width="6.2" height="6.2" fill="#e23b43"/><path d="M5.4 6L8.8 9.4M8.8 6L5.4 9.4" stroke="#fff" stroke-width="1"/></svg><svg class="abs" style="left:1.8px;top:174.1px" width="11" height="12" viewBox="0 0 11 12"><ellipse cx="3.4" cy="3.6" rx="2.3" ry="2.9" fill="#fdeaa6" stroke="#d9ae3c" stroke-width="0.7"/><rect x="2.2" y="6.3" width="2.4" height="2.6" fill="#a9a9b0"/><rect x="4" y="4.6" width="6.2" height="6.2" fill="#e23b43"/><path d="M5.4 6L8.8 9.4M8.8 6L5.4 9.4" stroke="#fff" stroke-width="1"/></svg><svg class="abs" style="left:1.8px;top:199.6px" width="11" height="12" viewBox="0 0 11 12"><ellipse cx="3.4" cy="3.6" rx="2.3" ry="2.9" fill="#fdeaa6" stroke="#d9ae3c" stroke-width="0.7"/><rect x="2.2" y="6.3" width="2.4" height="2.6" fill="#a9a9b0"/><rect x="4" y="4.6" width="6.2" height="6.2" fill="#e23b43"/><path d="M5.4 6L8.8 9.4M8.8 6L5.4 9.4" stroke="#fff" stroke-width="1"/></svg><svg class="abs" style="left:1.8px;top:212.35px" width="11" height="12" viewBox="0 0 11 12"><ellipse cx="3.4" cy="3.6" rx="2.3" ry="2.9" fill="#fdeaa6" stroke="#d9ae3c" stroke-width="0.7"/><rect x="2.2" y="6.3" width="2.4" height="2.6" fill="#a9a9b0"/><rect x="4" y="4.6" width="6.2" height="6.2" fill="#e23b43"/><path d="M5.4 6L8.8 9.4M8.8 6L5.4 9.4" stroke="#fff" stroke-width="1"/></svg><svg class="abs" style="left:1.8px;top:225.1px" width="11" height="12" viewBox="0 0 11 12"><ellipse cx="3.4" cy="3.6" rx="2.3" ry="2.9" fill="#fdeaa6" stroke="#d9ae3c" stroke-width="0.7"/><rect x="2.2" y="6.3" width="2.4" height="2.6" fill="#a9a9b0"/><rect x="4" y="4.6" width="6.2" height="6.2" fill="#e23b43"/><path d="M5.4 6L8.8 9.4M8.8 6L5.4 9.4" stroke="#fff" stroke-width="1"/></svg><svg class="abs" style="left:1.8px;top:250.6px" width="11" height="12" viewBox="0 0 11 12"><ellipse cx="3.4" cy="3.6" rx="2.3" ry="2.9" fill="#fdeaa6" stroke="#d9ae3c" stroke-width="0.7"/><rect x="2.2" y="6.3" width="2.4" height="2.6" fill="#a9a9b0"/><rect x="4" y="4.6" width="6.2" height="6.2" fill="#e23b43"/><path d="M5.4 6L8.8 9.4M8.8 6L5.4 9.4" stroke="#fff" stroke-width="1"/></svg><svg class="abs" style="left:1.8px;top:263.35px" width="11" height="12" viewBox="0 0 11 12"><ellipse cx="3.4" cy="3.6" rx="2.3" ry="2.9" fill="#fdeaa6" stroke="#d9ae3c" stroke-width="0.7"/><rect x="2.2" y="6.3" width="2.4" height="2.6" fill="#a9a9b0"/><rect x="4" y="4.6" width="6.2" height="6.2" fill="#e23b43"/><path d="M5.4 6L8.8 9.4M8.8 6L5.4 9.4" stroke="#fff" stroke-width="1"/></svg><svg class="abs" style="left:1.8px;top:276.1px" width="11" height="12" viewBox="0 0 11 12"><ellipse cx="3.4" cy="3.6" rx="2.3" ry="2.9" fill="#fdeaa6" stroke="#d9ae3c" stroke-width="0.7"/><rect x="2.2" y="6.3" width="2.4" height="2.6" fill="#a9a9b0"/><rect x="4" y="4.6" width="6.2" height="6.2" fill="#e23b43"/><path d="M5.4 6L8.8 9.4M8.8 6L5.4 9.4" stroke="#fff" stroke-width="1"/></svg><svg class="abs" style="left:1.8px;top:288.85px" width="11" height="12" viewBox="0 0 11 12"><ellipse cx="3.4" cy="3.6" rx="2.3" ry="2.9" fill="#fdeaa6" stroke="#d9ae3c" stroke-width="0.7"/><rect x="2.2" y="6.3" width="2.4" height="2.6" fill="#a9a9b0"/><rect x="4" y="4.6" width="6.2" height="6.2" fill="#e23b43"/><path d="M5.4 6L8.8 9.4M8.8 6L5.4 9.4" stroke="#fff" stroke-width="1"/></svg><svg class="abs" style="left:1.8px;top:314.35px" width="11" height="12" viewBox="0 0 11 12"><ellipse cx="3.4" cy="3.6" rx="2.3" ry="2.9" fill="#fdeaa6" stroke="#d9ae3c" stroke-width="0.7"/><rect x="2.2" y="6.3" width="2.4" height="2.6" fill="#a9a9b0"/><rect x="4" y="4.6" width="6.2" height="6.2" fill="#e23b43"/><path d="M5.4 6L8.8 9.4M8.8 6L5.4 9.4" stroke="#fff" stroke-width="1"/></svg><svg class="abs" style="left:1.8px;top:327.1px" width="11" height="12" viewBox="0 0 11 12"><ellipse cx="3.4" cy="3.6" rx="2.3" ry="2.9" fill="#fdeaa6" stroke="#d9ae3c" stroke-width="0.7"/><rect x="2.2" y="6.3" width="2.4" height="2.6" fill="#a9a9b0"/><rect x="4" y="4.6" width="6.2" height="6.2" fill="#e23b43"/><path d="M5.4 6L8.8 9.4M8.8 6L5.4 9.4" stroke="#fff" stroke-width="1"/></svg><svg class="abs" style="left:2px;top:392.35px" width="10" height="10" viewBox="0 0 10 10"><circle cx="5" cy="5" r="4.6" fill="#e23b43" stroke="#b0202a" stroke-width="0.6"/><path d="M3 3L7 7M7 3L3 7" stroke="#fff" stroke-width="1.3"/></svg><svg class="abs" style="left:24px;top:61.65px" width="7" height="7" viewBox="0 0 7 7"><circle cx="3.5" cy="3.5" r="2.9" fill="#fff" stroke="#8aa0c8" stroke-width="0.7"/><path d="M1.9 3.5H5.1" stroke="#6a80a8" stroke-width="0.8"/></svg><style>.code{font-family:"Liberation Mono",monospace;font-size:10px;line-height:12.75px;white-space:pre;color:#1c1c1c;-webkit-text-stroke:0.16px #fff}.code div{height:12.75px}.code b{-webkit-text-stroke:0.12px #fff}.k{color:#7f0055;font-weight:bold}.s{color:#2a00ff}.c{color:#3f7f5f}.e{background-image:linear-gradient(135deg,transparent 35%,#f03060 35%,#f03060 65%,transparent 65%),linear-gradient(45deg,transparent 35%,#f03060 35%,#f03060 65%,transparent 65%);background-size:2px 2px,2px 2px;background-position:0 9.4px,1px 9.4px;background-repeat:repeat-x}.bm{outline:1px solid #9a9a9a;outline-offset:-0.5px}.caret{display:inline-block;width:1px;height:11px;background:#000;vertical-align:-2px;margin-left:1px}</style><div class="abs code" style="left:33px;top:23.0px;width:496.5px;overflow:hidden"><div><b class="k">import</b> java.awt.event.ActionListener;</div><div></div><div><b class="k">class</b> <span class="e">GuessHandler</span> <b class="k">implements</b> ActionListener {</div><div>        <b class="k">public</b> <b class="k">void</b> actionPerformed(<span class="e">ActionEvent</span> e) {</div><div>            <b class="k">int</b> Guess;</div><div>            Guess = Integer.parseInt(<span class="e">guessInputJTextField</span>.getText());</div><div>           <b class="k">if</b> (Guess &lt; 0 || Guess &gt; 100){ <span class="c">// if number is lessthen 0 and greater th</span></div><div>               <span class="e">messageJLabel</span>.setText(<span class="s">&quot;Out of range; try again.&quot;</span>);</div><div>           } <b class="k">else</b> {</div><div></div><div>            <b class="k">if</b> (Guess &gt; <span class="e">number</span>) {<span class="caret"></span></div><div>                <span class="e">messageJLabel</span>.setText(<span class="s">&quot;Too High.&quot;</span>);</div><div>                <span class="e">SwingUtilities</span>.updateComponentTreeUI(<span class="e">messageJLabel</span>); <span class="c">// if guess is</span></div><div>            <span class="bm">}</span></div><div>            <b class="k">if</b> (Guess &lt; <span class="e">number</span>) {</div><div>                 <span class="e">messageJLabel</span>.setText(<span class="s">&quot;Too Low.&quot;</span>);</div><div>                <span class="e">SwingUtilities</span>.updateComponentTreeUI(<span class="e">messageJLabel</span>); <span class="c">// if guess is</span></div><div>             }</div><div>            <b class="k">if</b> (Guess == <span class="e">number</span>) {</div><div>                <span class="e">messageJLabel</span>.setText(<span class="s">&quot;Congratulations! You win!&quot;</span>);</div><div>                <span class="e">SwingUtilities</span>.updateComponentTreeUI(<span class="e">messageJLabel</span>);</div><div>                <span class="e">guessInputJTextField</span>.setEditable(<b class="k">false</b>); <span class="c">//once user won the game i</span></div><div>             }</div><div>                <span class="e">guessInputJTextField</span>.setText(<span class="s">&quot;&quot;</span>);</div><div>               <span class="e">message2JLabel</span>.setText(<span class="s">&quot;Number of Guesses: &quot;</span> + <span class="e">Guesses</span>++); <span class="c">// number</span></div><div></div><div>           }</div><div>        }</div><div>    }</div><div>}</div></div><div class="abs" style="left:532px;top:19.3px;width:11.3px;height:383px;background:#f1f1f1"></div><div class="abs" style="left:532px;top:33.2px;width:11.3px;height:352.6px;background:#cdcdcd"></div><svg class="abs" style="left:534.2px;top:25.3px" width="7" height="5" viewBox="0 0 7 5"><path d="M0.6 4L3.5 1L6.4 4" fill="none" stroke="#444" stroke-width="1.2"/></svg><svg class="abs" style="left:534.2px;top:392.3px" width="7" height="5" viewBox="0 0 7 5"><path d="M0.6 1L3.5 4L6.4 1" fill="none" stroke="#444" stroke-width="1.2"/></svg><div class="abs" style="left:545.6px;top:24.3px;width:5.6px;height:5.2px;background:#f5127d"></div><div class="abs" style="left:545px;top:55.3px;width:7.1px;height:3.9px;border:1px solid #fb2a8c;background:#fbc4dd"></div><div class="abs" style="left:545px;top:67.8px;width:7.1px;height:3.9px;border:1px solid #fb2a8c;background:#fbc4dd"></div><div class="abs" style="left:545px;top:90.8px;width:7.1px;height:3.9px;border:1px solid #fb2a8c;background:#fbc4dd"></div><div class="abs" style="left:545px;top:114.8px;width:7.1px;height:3.9px;border:1px solid #fb2a8c;background:#fbc4dd"></div><div class="abs" style="left:545px;top:149.8px;width:7.1px;height:3.9px;border:1px solid #fb2a8c;background:#fbc4dd"></div><div class="abs" style="left:545px;top:162.3px;width:7.1px;height:3.9px;border:1px solid #fb2a8c;background:#fbc4dd"></div><div class="abs" style="left:545px;top:174.8px;width:7.1px;height:3.9px;border:1px solid #fb2a8c;background:#fbc4dd"></div><div class="abs" style="left:545px;top:210.3px;width:7.1px;height:3.9px;border:1px solid #fb2a8c;background:#fbc4dd"></div><div class="abs" style="left:545px;top:218.3px;width:7.1px;height:3.9px;border:1px solid #fb2a8c;background:#fbc4dd"></div><div class="abs" style="left:545px;top:233.3px;width:7.1px;height:3.9px;border:1px solid #fb2a8c;background:#fbc4dd"></div><div class="abs" style="left:545px;top:256.8px;width:7.1px;height:3.9px;border:1px solid #fb2a8c;background:#fbc4dd"></div><div class="abs" style="left:545px;top:268.8px;width:7.1px;height:3.9px;border:1px solid #fb2a8c;background:#fbc4dd"></div><div class="abs" style="left:545px;top:280.8px;width:7.1px;height:3.9px;border:1px solid #fb2a8c;background:#fbc4dd"></div><div class="abs" style="left:545px;top:291.8px;width:7.1px;height:3.9px;border:1px solid #fb2a8c;background:#fbc4dd"></div><div class="abs" style="left:545px;top:315.8px;width:7.1px;height:3.9px;border:1px solid #fb2a8c;background:#fbc4dd"></div><div class="abs" style="left:545px;top:328.8px;width:7.1px;height:3.9px;border:1px solid #fb2a8c;background:#fbc4dd"></div><div class="abs" style="left:545px;top:385.8px;width:7.1px;height:3.9px;border:1px solid #fb2a8c;background:#fbc4dd"></div><div class="abs" style="left:544px;top:32.4px;width:9px;height:0.8px;background:#c4c4c4"></div><div class="abs" style="left:31px;top:402.3px;width:512.3px;height:11.5px;background:#f1f1f1"></div><div class="abs" style="left:44px;top:402.3px;width:332.5px;height:11.5px;background:#cdcdcd"></div><svg class="abs" style="left:35px;top:404.5px" width="5" height="7" viewBox="0 0 5 7"><path d="M4 0.6L1 3.5L4 6.4" fill="none" stroke="#444" stroke-width="1.2"/></svg><svg class="abs" style="left:522.5px;top:404.5px" width="5" height="7" viewBox="0 0 5 7"><path d="M1 0.6L4 3.5L1 6.4" fill="none" stroke="#444" stroke-width="1.2"/></svg></div><div class="panel" style="left:190px;top:478px;width:555px;height:45.6px;"><div class="abs" style="left:0;top:0;width:556px;height:20px;background:linear-gradient(#f6f8fc,#eef1f9)"></div><div class="abs" style="left:181px;top:0;width:71px;height:20px;background:#fff;border-radius:5px 7px 0 0"></div><svg class="abs" style="left:5px;top:4.5px" width="11" height="12" viewBox="0 0 11 12"><rect x="1.5" y="0.8" width="8" height="10" fill="#f3f3f3" stroke="#9a9a9a" stroke-width="0.7"/><rect x="0.4" y="6.4" width="4.6" height="4.6" fill="#e9a0a4"/><path d="M1.5 7.5L3.9 9.9M3.9 7.5L1.5 9.9" stroke="#fff" stroke-width="0.8"/><path d="M6 3H8.5M6 5H8.5" stroke="#b0a0c0" stroke-width="0.8"/></svg><div class="abs ui" style="left:19.5px;top:5px;color:#8a8a8a">Problems</div><div class="abs ui" style="left:65.5px;top:5px;color:#8aa0c8;font-size:9px">@</div><div class="abs ui" style="left:79px;top:5px;color:#8a8a8a">Javadoc</div><svg class="abs" style="left:118.5px;top:4.5px" width="11" height="12" viewBox="0 0 11 12"><path d="M1 0.8H6.5L8.5 2.8V11H1Z" fill="#fbfbf3" stroke="#b0a880" stroke-width="0.7"/><circle cx="6.8" cy="7" r="2.4" fill="#fff" stroke="#d9a93a" stroke-width="0.9"/><path d="M8.5 8.8L10.4 10.8" stroke="#d9a93a" stroke-width="1.1"/><path d="M2.5 4H5M2.5 6H4" stroke="#b9c4dc" stroke-width="0.7"/></svg><div class="abs ui" style="left:132.5px;top:5px;color:#8a8a8a">Declaration</div><svg class="abs" style="left:186px;top:5.5px" width="11" height="10" viewBox="0 0 11 10"><rect x="0.6" y="0.6" width="9.8" height="6.6" fill="#dfe9fa" stroke="#2f5aa8" stroke-width="1"/><rect x="2.2" y="2.2" width="6.6" height="3.2" fill="#fff"/><rect x="3" y="8" width="5" height="1.3" fill="#2f5aa8"/></svg><div class="abs ui" style="left:199.5px;top:5px;color:#111">Console</div><svg class="abs" style="left:238.5px;top:6.5px" width="8" height="8" viewBox="0 0 8 8"><path d="M0.8 0.8H2.6L4 2.4L5.4 0.8H7.2V2.2L5.6 4L7.2 5.8V7.2H5.4L4 5.6L2.6 7.2H0.8V5.8L2.4 4L0.8 2.2Z" fill="#fff" stroke="#666" stroke-width="0.7"/></svg><div class="abs" style="left:295.5px;top:6px;width:7.5px;height:7.5px;background:#e0353d;border:0.6px solid #b72028"></div><svg class="abs" style="left:311.5px;top:5px" width="10" height="10" viewBox="0 0 10 10"><path d="M1.5 1.5L8.5 8.5M8.5 1.5L1.5 8.5" stroke="#8f8f8f" stroke-width="2.2"/></svg><svg class="abs" style="left:326.5px;top:4px" width="12" height="12" viewBox="0 0 12 12"><path d="M1 2L7.5 8.5M7.5 2L1 8.5" stroke="#a5a5a5" stroke-width="1.8"/><path d="M4.5 4.5L11 11M11 4.5L4.5 11" stroke="#8f8f8f" stroke-width="1.8"/></svg><div class="abs" style="left:345.5px;top:3.5px;width:1px;height:13px;background:#a0a0a0"></div><svg class="abs" style="left:352px;top:4.5px" width="12" height="12" viewBox="0 0 12 12"><path d="M1.5 0.8H7L9 2.8V10.5H1.5Z" fill="#fbfbf3" stroke="#8a8a7a" stroke-width="0.7"/><path d="M3 3.5H6.5M3 5.3H7.5M3 7.1H6" stroke="#7a8ab0" stroke-width="0.7"/><path d="M7 7.5L11 11.5M11 7.5L7 11.5" stroke="#777" stroke-width="1.3"/></svg><svg class="abs" style="left:368.5px;top:4.5px" width="12" height="12" viewBox="0 0 12 12"><path d="M1.5 0.8H7L9 2.8V10.5H1.5Z" fill="#fbfbf3" stroke="#8a8a7a" stroke-width="0.7"/><path d="M3 3.5H6.5M3 5.3H7.5M3 7.1H6" stroke="#7a8ab0" stroke-width="0.7"/><rect x="0.5" y="6" width="5" height="4.8" rx="0.8" fill="#e9b53a" stroke="#9a6a10" stroke-width="0.6"/><path d="M1.6 6V4.8A1.4 1.4 0 0 1 4.4 4.8V6" fill="none" stroke="#9a6a10" stroke-width="0.8"/></svg><svg class="abs" style="left:385px;top:4.5px" width="12" height="12" viewBox="0 0 12 12"><path d="M1.5 0.8H7L9 2.8V10.5H1.5Z" fill="#fbfbf3" stroke="#8a8a7a" stroke-width="0.7"/><path d="M3 3.5H6.5M3 5.3H7.5M3 7.1H6" stroke="#7a8ab0" stroke-width="0.7"/><path d="M5 8H10.5V6.4L12 8.6L10.5 10.8V9.4H5Z" fill="#f3c64a" stroke="#a97a10" stroke-width="0.5"/></svg><div class="abs" style="left:401.5px;top:2.5px;width:16px;height:15.5px;background:#cfe3fb;border:1px solid #5b9be0"></div><div class="abs" style="left:417.5px;top:2.5px;width:16px;height:15.5px;background:#cfe3fb;border:1px solid #5b9be0"></div><svg class="abs" style="left:403.5px;top:4.5px" width="12" height="12" viewBox="0 0 12 12"><rect x="2.5" y="0.8" width="9" height="6.4" fill="#f3f6fc" stroke="#4a6aa8" stroke-width="0.9"/><path d="M4 2.8H10M4 4.6H8.5" stroke="#7a8ab0" stroke-width="0.7"/><rect x="0.6" y="6.6" width="5" height="3" fill="#dfe6f3" stroke="#55606f" stroke-width="0.7"/><rect x="1.6" y="10.3" width="3" height="1" fill="#55606f"/></svg><svg class="abs" style="left:419.5px;top:4.5px" width="12" height="12" viewBox="0 0 12 12"><rect x="2.5" y="0.8" width="9" height="6.4" fill="#f3f6fc" stroke="#4a6aa8" stroke-width="0.9"/><path d="M4 2.8H10M4 4.6H8.5" stroke="#7a8ab0" stroke-width="0.7"/><rect x="0.6" y="6.6" width="5" height="3" fill="#dfe6f3" stroke="#55606f" stroke-width="0.7"/><rect x="1.6" y="10.3" width="3" height="1" fill="#55606f"/><rect x="6" y="2" width="3.4" height="3.4" fill="#e0353d"/></svg><div class="abs" style="left:436.5px;top:3.5px;width:1px;height:13px;background:#a0a0a0"></div><svg class="abs" style="left:444.5px;top:4.5px" width="12" height="12" viewBox="0 0 12 12"><rect x="0.8" y="3.5" width="9.4" height="7" fill="#eef3fb" stroke="#3a5a98" stroke-width="0.9"/><rect x="0.8" y="3.5" width="9.4" height="2" fill="#3a5a98"/><path d="M6.5 3.2L9 0.6L11.4 2.6L9.6 5Z" fill="#2fa84a" stroke="#1a7030" stroke-width="0.5"/></svg><svg class="abs" style="left:461.5px;top:4.5px" width="12" height="12" viewBox="0 0 12 12"><rect x="1" y="1" width="9.8" height="7" fill="#dfe9fa" stroke="#2f5aa8" stroke-width="1.1"/><rect x="2.8" y="2.8" width="6.2" height="3.2" fill="#fff"/><rect x="3.5" y="9" width="5" height="1.4" fill="#2f5aa8"/></svg><svg class="abs" style="left:477.5px;top:9px" width="6" height="4" viewBox="0 0 6 4"><path d="M0.2 0.4H5.8L3 3.6Z" fill="#222"/></svg><svg class="abs" style="left:490.5px;top:3.5px" width="13" height="13" viewBox="0 0 13 13"><rect x="0.8" y="3.8" width="9.6" height="8" fill="#fbfbf3" stroke="#4a6aa8" stroke-width="0.9"/><rect x="0.8" y="3.8" width="9.6" height="1.8" fill="#7a9ad8"/><path d="M9.8 0.4L11 2.6L12.8 3.4L11 4.4L9.8 6.4L8.8 4.4L7 3.4L8.8 2.6Z" fill="#f6d04a" stroke="#a97a10" stroke-width="0.5"/></svg><svg class="abs" style="left:507.5px;top:9px" width="6" height="4" viewBox="0 0 6 4"><path d="M0.2 0.4H5.8L3 3.6Z" fill="#222"/></svg><svg class="abs" style="left:519.7px;top:5.4px" width="9" height="5" viewBox="0 0 9 5"><rect x="0.6" y="0.6" width="7.6" height="3.2" rx="0.9" fill="#fff" stroke="#777" stroke-width="0.8"/></svg><svg class="abs" style="left:536.6px;top:5.4px" width="9" height="9" viewBox="0 0 9 9"><rect x="0.6" y="0.6" width="7.4" height="7" fill="#fff" stroke="#555" stroke-width="0.8"/><path d="M0.6 2.3H8" stroke="#555" stroke-width="0.8"/></svg><div class="abs ui" style="left:3px;top:21.6px;color:#111;letter-spacing:-0.13px">lap1a [Java Application] C:\Program Files\Java\jre1.8.0_161\bin\javaw.exe (Jul 20, 2018, 11:06:23 AM)</div><div class="abs" style="left:3px;top:33.2px;width:551px;height:0.8px;background:#777"></div><div class="abs" style="left:82.3px;top:34.2px;width:213.6px;height:12px;background:#3399ff"></div><div class="abs" style="left:4.8px;top:35.8px;font-family:'Liberation Mono',monospace;font-size:10px;line-height:12px;white-space:pre;color:#111;letter-spacing:0.09px">This program <span style="color:#fff">allows you to play a guessing game.</span></div><div class="abs" style="left:540.5px;top:34.5px;width:13px;height:9.5px;background:#f1f1f1"></div></div><div class="panel" style="left:749.5px;top:58.4px;width:247px;height:465.6px;"><div class="abs" style="left:0;top:0;width:247px;height:21px;background:linear-gradient(#f7f9fd,#f0f3fa)"></div><div class="abs" style="left:0;top:0;width:75px;height:21px;background:linear-gradient(#f4f7fc,#fff 70%);border-radius:5px 8px 0 0"></div><svg class="abs" style="left:3px;top:4.4px" width="12" height="12" viewBox="0 0 12 12"><circle cx="6" cy="6" r="5.4" fill="#f4f7fc" stroke="#6a7a9a" stroke-width="0.8"/><circle cx="4" cy="4.5" r="1.9" fill="#3fa0e0"/><circle cx="8" cy="4.5" r="1.9" fill="#f0b030"/><circle cx="6" cy="8.2" r="1.9" fill="#4fb04a"/></svg><div class="abs ui" style="left:18px;top:5.4px;color:#111;letter-spacing:-0.2px">Welcome</div><svg class="abs" style="left:61.5px;top:7.2px" width="8" height="8" viewBox="0 0 8 8"><path d="M0.8 0.8H2.6L4 2.4L5.4 0.8H7.2V2.2L5.6 4L7.2 5.8V7.2H5.4L4 5.6L2.6 7.2H0.8V5.8L2.4 4L0.8 2.2Z" fill="#fff" stroke="#666" stroke-width="0.7"/></svg><svg class="abs" style="left:107px;top:4px" width="11" height="12" viewBox="0 0 11 12"><path d="M0.8 6L5.5 1L10.2 6V11.2H0.8Z" fill="#e9e9e9" stroke="#b5b5b5" stroke-width="0.8"/><rect x="4" y="7" width="3" height="4.2" fill="#cfcfcf"/><rect x="7.6" y="1" width="1.4" height="3" fill="#c5c5c5"/></svg><svg class="abs" style="left:123.5px;top:5.5px" width="12" height="9" viewBox="0 0 12 9"><path d="M11.2 2.8H5.2V0.8L0.8 4.5L5.2 8.2V6.2H11.2Z" fill="#ececec" stroke="#b5b5b5" stroke-width="0.8"/></svg><svg class="abs" style="left:140px;top:5.5px" width="12" height="9" viewBox="0 0 12 9"><path d="M0.8 2.8H6.8V0.8L11.2 4.5L6.8 8.2V6.2H0.8Z" fill="#ececec" stroke="#b5b5b5" stroke-width="0.8"/></svg><div class="abs" style="left:158.5px;top:4.5px;font-weight:bold;font-size:9px;line-height:11px;color:#2a5aa8;font-family:'Liberation Sans',sans-serif">A</div><svg class="abs" style="left:164.5px;top:5px" width="5" height="4" viewBox="0 0 5 4"><path d="M0.3 0.5H4.7L2.5 3.5Z" fill="#2a5aa8"/></svg><div class="abs" style="left:175.5px;top:3px;font-weight:bold;font-size:11px;line-height:13px;color:#2a5aa8;font-family:'Liberation Sans',sans-serif">A</div><svg class="abs" style="left:183.5px;top:4px" width="5" height="4" viewBox="0 0 5 4"><path d="M0.3 3.5H4.7L2.5 0.5Z" fill="#2a5aa8"/></svg><div class="abs" style="left:192.5px;top:3px;width:12px;height:13px;background:#e6effb;border:1px solid #7a9ac8"></div><svg class="abs" style="left:194.5px;top:5px" width="9" height="9" viewBox="0 0 9 9"><rect x="0.5" y="0.5" width="2.6" height="2.6" fill="#fff" stroke="#4a6aa8" stroke-width="0.6"/><rect x="0.5" y="5.4" width="2.6" height="2.6" fill="#fff" stroke="#4a6aa8" stroke-width="0.6"/><path d="M4.4 1.8H8.4M4.4 6.7H8.4" stroke="#4a6aa8" stroke-width="0.8"/></svg><svg class="abs" style="left:211.2px;top:5.499999999999998px" width="9" height="5" viewBox="0 0 9 5"><rect x="0.6" y="0.6" width="7.6" height="3.2" rx="0.9" fill="#fff" stroke="#777" stroke-width="0.8"/></svg><svg class="abs" style="left:228.1px;top:5.700000000000001px" width="9" height="9" viewBox="0 0 9 9"><rect x="0.6" y="0.6" width="7.4" height="7" fill="#fff" stroke="#555" stroke-width="0.8"/><path d="M0.6 2.3H8" stroke="#555" stroke-width="0.8"/></svg><div class="abs" style="left:1.5px;top:21.3px;width:231px;height:442.7px;background:#2c2443"></div><div class="abs" style="left:232.5px;top:21.3px;width:11.5px;height:442.7px;background:#f1f1f1"></div><div class="abs" style="left:232.5px;top:46.9px;width:11.5px;height:373px;background:#cdcdcd"></div><svg class="abs" style="left:234.5px;top:33.9px" width="8" height="6" viewBox="0 0 8 6"><path d="M0.6 5L4 1.2L7.4 5" fill="none" stroke="#444" stroke-width="1.3"/></svg><svg class="abs" style="left:234.5px;top:443.9px" width="8" height="6" viewBox="0 0 8 6"><path d="M0.6 1L4 4.8L7.4 1" fill="none" stroke="#444" stroke-width="1.3"/></svg><div class="abs" style="left:68.5px;top:45.6px;font-size:9px;line-height:9.6px;color:#fff;white-space:nowrap"><b>Overview</b><br>Get an overview of the features</div><div class="abs" style="left:68.5px;top:96.6px;font-size:9px;line-height:9.6px;color:#fff;white-space:nowrap"><b>Tutorials</b><br>Go through tutorials</div><div class="abs" style="left:68.5px;top:147.2px;font-size:9px;line-height:9.6px;color:#fff;white-space:nowrap"><b>Samples</b><br>Try out the samples</div><div class="abs" style="left:68.5px;top:198.6px;font-size:9px;line-height:9.6px;color:#fff;white-space:nowrap"><b>What's New</b><br>Find out what is new</div><svg class="abs" style="left:35.5px;top:46.6px" width="22" height="21" viewBox="0 0 22 21"><path d="M1.5 4.5L7.5 2.5L14 4.5L20 2.5V16L14 18L7.5 16L1.5 18Z M7.5 2.5V16 M14 4.5V18" fill="none" stroke="#f7941e" stroke-width="1.1" stroke-linejoin="round"/></svg><svg class="abs" style="left:35.5px;top:99.19999999999999px" width="23" height="20" viewBox="0 0 23 20"><path d="M0.3 5.6L11.5 2L22.7 5.6L11.5 9.2Z" fill="#f7941e"/><path d="M5.8 8.6V12.6C8 15.4 15 15.4 17.2 12.6V8.6L11.5 10.4Z" fill="#f7941e"/><path d="M2.6 6.4V14" stroke="#f7941e" stroke-width="1"/><path d="M2.6 12.6L1.4 16.6H3.8Z" fill="#f7941e"/></svg><svg class="abs" style="left:36.5px;top:147.79999999999998px" width="20" height="20" viewBox="0 0 20 20"><path d="M2.2 17.6L16.4 3.4" stroke="#f7941e" stroke-width="3.6" stroke-linecap="butt"/><path d="M12 5.2L14.6 7.8" stroke="#2c2443" stroke-width="0.9"/><path d="M7 2.2L7.6 3.8L9.2 4.4L7.6 5L7 6.6L6.4 5L4.8 4.4L6.4 3.8Z" fill="#f7941e"/><circle cx="3.4" cy="3" r="0.9" fill="#f7941e"/><circle cx="17.4" cy="10.4" r="0.9" fill="#f7941e"/><circle cx="10.4" cy="2.2" r="0.7" fill="#f7941e"/></svg><svg class="abs" style="left:35.299999999999955px;top:198.6px" width="22" height="22" viewBox="0 0 22 22"><circle cx="11" cy="11" r="9.3" fill="none" stroke="#f7941e" stroke-width="1.6"/><path d="M11 4.8L12.8 9H17.2L13.7 11.8L15 16.2L11 13.6L7 16.2L8.3 11.8L4.8 9H9.2Z" fill="none" stroke="#f7941e" stroke-width="1.2" stroke-linejoin="round"/></svg><svg class="abs" style="left:33.5px;top:248.6px" width="42" height="38" viewBox="0 0 42 38"><circle cx="19" cy="18.8" r="17.4" fill="none" stroke="#fff" stroke-width="0.9"/><circle cx="22" cy="18.8" r="16.8" fill="#fff"/><rect x="3" y="14.6" width="38" height="1.6" fill="#2c2443"/><rect x="3" y="18" width="38" height="1.6" fill="#2c2443"/><rect x="3" y="21.4" width="38" height="1.6" fill="#2c2443"/></svg><div class="abs" style="left:81.5px;top:240.49999999999997px;font-size:41px;line-height:50px;color:#fff;letter-spacing:-1.2px;white-space:nowrap;-webkit-text-stroke:0.3px #2c2443">eclipse</div></div><div class="abs" style="left:999.5px;top:58.6px;width:30px;height:44.6px;background:#f0f3fa;border:1px solid #c5cce0;border-radius:5px"></div><div class="abs" style="left:1005.5px;top:63px;width:12px;height:1px;background-image:linear-gradient(90deg,#9a9a9a 45%,transparent 45%);background-size:3.2px 1px"></div><svg class="abs" style="left:1008px;top:71.5px" width="7" height="6" viewBox="0 0 9 8"><rect x="2.6" y="0.6" width="5.6" height="3.6" fill="#fff" stroke="#444" stroke-width="0.8"/><rect x="2.6" y="0.4" width="5.6" height="1.2" fill="#444"/><rect x="0.6" y="3.6" width="5.6" height="3.6" fill="#fff" stroke="#444" stroke-width="0.8"/><rect x="0.6" y="3.4" width="5.6" height="1.2" fill="#444"/></svg><svg class="abs" style="left:1006px;top:85px" width="11" height="12" viewBox="0 0 11 12"><rect x="1.6" y="0.8" width="7.6" height="8.6" fill="#dcdff0" stroke="#6a6a8a" stroke-width="0.8"/><path d="M3 3H8M3 5H8M3 7H6.5" stroke="#7a7a9a" stroke-width="0.7"/><path d="M4 9.6L5.5 11.4L7 9.6Z" fill="#6a6a8a"/></svg><svg class="abs" style="left:564px;top:528.6px" width="13" height="13" viewBox="0 0 13 13"><rect x="0.6" y="4.6" width="8.5" height="7" fill="#f3ecd3" stroke="#8a8a7a" stroke-width="0.7"/><circle cx="8" cy="4" r="2.8" fill="#f6d04a" stroke="#a98a30" stroke-width="0.7"/><path d="M4 9H11V7.5L12.6 9.6L11 11.6V10.2H4Z" fill="#9ab4e0" stroke="#5a7ab0" stroke-width="0.5"/></svg><div class="abs" style="left:562.5px;top:541.6px;width:22px;height:0.9px;background:#9a9eaa"></div><div class="abs" style="left:583.8px;top:527px;width:0.9px;height:15px;background:#b5b9c5"></div><div class="abs" style="left:586.2px;top:526px;width:1px;height:17px;background:#a5abb8"></div><div class="abs" style="left:665.5px;top:526px;width:1px;height:17px;background:#a5abb8"></div><div class="abs" style="left:739px;top:526px;width:1px;height:17px;background:#a5abb8"></div><div class="abs ui" style="left:593px;top:529.8px;color:#111;letter-spacing:-0.1px">Writable</div><div class="abs ui" style="left:671px;top:529.8px;color:#111">Smart Insert</div><div class="abs ui" style="left:744.8px;top:529.8px;color:#111;letter-spacing:-0.2px">11 : 34</div><div class="abs" style="left:811px;top:528px;width:1px;height:15px;background-image:linear-gradient(#8a8a8a 50%,transparent 50%);background-size:1px 2.5px"></div><div class="abs" style="left:0;top:545.7px;width:1024px;height:31px;overflow:hidden;background:#6c7046;border-top:0.8px solid #5f6139"><svg class="abs" style="left:0;top:0" width="1024" height="31" viewBox="0 0 1024 31"><defs><filter id="tb1" x="-10%" y="-50%" width="120%" height="200%"><feGaussianBlur stdDeviation="5 3"/></filter><filter id="tb2" x="-10%" y="-50%" width="120%" height="200%"><feGaussianBlur stdDeviation="12 5"/></filter><pattern id="tex" width="4.6" height="3.6" patternUnits="userSpaceOnUse" patternTransform="rotate(-20)"><rect width="4.6" height="3.6" fill="#777d52"/><circle cx="1.2" cy="1.1" r="0.9" fill="#5a613e"/><circle cx="3.5" cy="2.9" r="0.9" fill="#5f6642"/></pattern></defs><rect width="1024" height="31" fill="#6c7046"/><rect x="0" y="0" width="330" height="31" fill="#74774a"/><rect x="300" y="-6" width="60" height="44" fill="#74774a" filter="url(#tb2)"/><linearGradient id="tg" x1="0" x2="1" y1="0" y2="0"><stop offset="0" stop-color="#fff" stop-opacity="0"/><stop offset="0.08" stop-color="#fff" stop-opacity="1"/><stop offset="0.85" stop-color="#fff" stop-opacity="1"/><stop offset="1" stop-color="#fff" stop-opacity="0"/></linearGradient><mask id="tm"><rect x="316" y="0" width="190" height="31" fill="url(#tg)"/></mask><rect x="316" y="0" width="190" height="31" fill="url(#tex)" mask="url(#tm)"/><rect x="480" y="-6" width="160" height="44" fill="#73784c" filter="url(#tb2)"/><path d="M570 -8L700 -8L700 40L668 40Z" fill="#8b8f66" filter="url(#tb1)"/><path d="M640 -6L792 -6L754 38L684 38Z" fill="#a9ad83" filter="url(#tb1)"/><ellipse cx="735" cy="4" rx="42" ry="8" fill="#babd98" filter="url(#tb1)" opacity="0.8"/><rect x="830" y="-6" width="200" height="44" fill="#6e7248" filter="url(#tb2)"/><ellipse cx="930" cy="34" rx="62" ry="16" fill="#9a9e77" filter="url(#tb2)" opacity="0.85"/><ellipse cx="1010" cy="6" rx="26" ry="8" fill="#8a8e66" filter="url(#tb2)" opacity="0.6"/></svg><div class="abs" style="left:0;top:-0.4px;width:1024px;height:31px"><div class="abs" style="left:178.5px;top:0.9px;width:44px;height:28.2px;background:rgba(255,255,255,0.18);border:1px solid rgba(255,255,255,0.25)"></div><div class="abs" style="left:225px;top:0.9px;width:44px;height:28.2px;background:rgba(255,255,255,0.32);border:1px solid rgba(255,255,255,0.5)"></div><div class="abs" style="left:271px;top:0.9px;width:44px;height:28.2px;background:rgba(255,255,255,0.18);border:1px solid rgba(255,255,255,0.25)"></div><svg class="abs" style="left:8.6px;top:5.2px" width="20.4" height="19" viewBox="0 0 22 20" preserveAspectRatio="none"><path d="M0 3L9 1.6V9.4H0Z M10.2 1.4L21.5 0V9.4H10.2Z M0 10.6H9V18.4L0 17Z M10.2 10.6H21.5V20L10.2 18.6Z" fill="#fff"/></svg><svg class="abs" style="left:48px;top:2.6px" width="26" height="25" viewBox="0 0 26 25"><defs><linearGradient id="ieg" x1="0" y1="0" x2="0" y2="1"><stop offset="0" stop-color="#7fd6f9"/><stop offset="0.5" stop-color="#3fb0ee"/><stop offset="1" stop-color="#1c86d6"/></linearGradient></defs><circle cx="13.4" cy="13.4" r="7.4" fill="none" stroke="url(#ieg)" stroke-width="5.2"/><rect x="9" y="11.4" width="14.6" height="3.6" fill="#3aa8ea"/><rect x="15.6" y="15" width="9.6" height="4.4" fill="#74774a"/><path d="M4.2 22C-0.4 17.6 6 6 18 2.4C22.8 1.2 24.8 3.2 23 6.8" fill="none" stroke="#f4c534" stroke-width="1.7"/></svg><div class="abs" style="left:96px;top:3.6px;width:22.8px;height:22.4px;background:#078a0c"></div><svg class="abs" style="left:98px;top:4.6px" width="19" height="20" viewBox="0 0 19 20"><path d="M5.6 5.6C5.6 0.4 13.4 0.4 13.4 5.6" fill="none" stroke="#fff" stroke-width="1.1"/><path d="M1 6.6L17.6 4.8L17.2 17.8L1 19Z" fill="#fff"/><path d="M4 9.6L8.2 9.1V12.2H4Z M9.2 9L14.6 8.4V12.2H9.2Z M4 13.2H8.2V16.4L4 15.9Z M9.2 13.2H14.6V17.2L9.2 16.6Z" fill="#078a0c"/></svg><svg class="abs" style="left:141.6px;top:5px" width="25" height="22" viewBox="0 0 25 22"><path d="M0.8 2.4H8.6L10 4H23.6V16.6H0.8Z" fill="#f4e09a" stroke="#d2b35a" stroke-width="0.7"/><rect x="0.8" y="5.6" width="22.8" height="11.6" fill="#f8e8ad" stroke="#d2b35a" stroke-width="0.7"/><rect x="3.4" y="1.2" width="2.2" height="1.4" fill="#2f9a3a"/><rect x="9.6" y="2.2" width="2.2" height="1.4" fill="#d03a30"/><rect x="15.4" y="3.8" width="2.6" height="1.4" fill="#3a8ae0"/><path d="M4.4 21.4V13.4H20V21.4" fill="none" stroke="#4fa6e4" stroke-width="2.8"/><path d="M4.4 13.4H20" stroke="#8fd0f6" stroke-width="1.2"/><rect x="7" y="17.2" width="10.4" height="4.6" fill="#9ed2f2"/></svg><svg class="abs" style="left:188.5px;top:3px" width="25" height="25" viewBox="0 0 25 25"><circle cx="12.5" cy="12.5" r="12" fill="#e53e30"/><path d="M12.5 12.5L2.1 6.5A12 12 0 0 0 10.5 24.3L16 14.6Z" fill="#2fa84f"/><path d="M12.5 12.5L17.8 15.5L10.6 24.35A12 12 0 0 0 24.2 9.6H14Z" fill="#f9c62d"/><circle cx="12.5" cy="12.5" r="5.6" fill="#fff"/><circle cx="12.5" cy="12.5" r="4.4" fill="#3f86f0"/></svg><svg class="abs" style="left:235px;top:3.5px" width="26" height="24" viewBox="0 0 26 24"><circle cx="12.3" cy="12" r="11.8" fill="#f7941e"/><circle cx="13.6" cy="12" r="11.4" fill="#2c2255"/><rect x="2.6" y="8.4" width="22.6" height="1.6" fill="#fff"/><rect x="2.2" y="11.2" width="23" height="1.6" fill="#fff"/><rect x="2.6" y="14" width="22.6" height="1.6" fill="#fff"/></svg><div class="abs" style="left:281px;top:2.9px;width:24px;height:24px;border-radius:2.6px;background:linear-gradient(#2aaee6,#1188d8)"></div><div class="abs" style="left:284px;top:5.9px;width:18px;height:18px;border-radius:2.2px;background:#fff"></div><svg class="abs" style="left:286px;top:8.2px" width="14" height="13.5" viewBox="0 0 14 13.5"><path d="M5.8 1.1H1.2V12.4H5.8M8.2 1.1H12.8V12.4H8.2" fill="none" stroke="#454545" stroke-width="2.2"/></svg><svg class="abs" style="left:850px;top:13.5px" width="6" height="4" viewBox="0 0 6 4"><path d="M0 4L3 0.4L6 4Z" fill="#fff"/></svg><svg class="abs" style="left:867px;top:8.5px" width="12" height="12" viewBox="0 0 12 12"><path d="M1 0.5V11.5" stroke="#fff" stroke-width="1.3"/><path d="M2.4 1.2H7.8V2.6H11L9.4 4.6L11 6.6H6V5.4H2.4Z" fill="#fff"/></svg><svg class="abs" style="left:885px;top:9px" width="12" height="12" viewBox="0 0 12 12"><rect x="0.5" y="0.5" width="4.6" height="4.6" fill="#2ab8f0" stroke="#0a3a90" stroke-width="0.6"/><rect x="6.5" y="0.5" width="4.6" height="4.6" fill="#2a7ae0" stroke="#0a3a90" stroke-width="0.6"/><rect x="0.5" y="6.5" width="4.6" height="4.6" fill="#2a7ae0" stroke="#0a3a90" stroke-width="0.6"/><rect x="6.5" y="6.5" width="4.6" height="4.6" fill="#2a7ae0" stroke="#0a3a90" stroke-width="0.6"/></svg><svg class="abs" style="left:907.4px;top:8.6px" width="7" height="12.4" viewBox="0 0 7 13"><rect x="2.2" y="0.4" width="2.6" height="1.4" fill="#fff"/><rect x="0.7" y="1.7" width="5.6" height="10.6" fill="none" stroke="#fff" stroke-width="1.1"/><rect x="2" y="5.5" width="3" height="5.5" fill="#fff"/></svg><svg class="abs" style="left:920px;top:9.4px" width="13" height="13" viewBox="0 0 13 13"><path d="M0.8 4.2H2.8L5.8 1.4V10.4L2.8 7.8H0.8Z" fill="#fff"/><path d="M7 3.4C8 4.6 8 7 7 8.2" fill="none" stroke="#fff" stroke-width="0.8"/><circle cx="9.2" cy="9" r="2.6" fill="#fff" stroke="#e3262a" stroke-width="1.2"/><path d="M7.4 7.2L11 10.8" stroke="#e3262a" stroke-width="1.1"/></svg><div class="abs" style="left:942.5px;top:9.5px;font-size:8.5px;line-height:10px;color:#fff;letter-spacing:-0.2px">ENG</div><div class="abs" style="left:966px;top:4.8px;width:50px;text-align:center;font-size:9px;line-height:11px;color:#fff;letter-spacing:-0.2px">3:11 PM</div><div class="abs" style="left:966px;top:16.8px;width:50px;text-align:center;font-size:9px;line-height:11px;color:#fff;letter-spacing:-0.2px">7/20/2018</div></div></div></body></html>
